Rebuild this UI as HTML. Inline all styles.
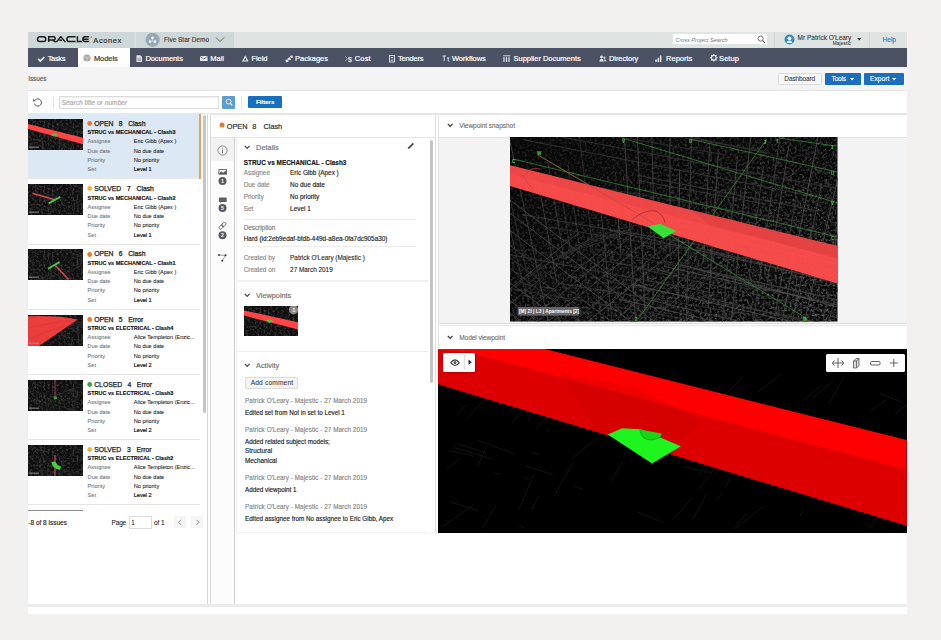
<!DOCTYPE html>
<html><head><meta charset="utf-8">
<style>
*{box-sizing:border-box;margin:0;padding:0}
html,body{width:941px;height:640px;overflow:hidden;background:#f2f1ef;font-family:"Liberation Sans",sans-serif;color:#222}
.a{position:absolute}
.t{position:absolute;white-space:nowrap;line-height:1}
svg{position:absolute;overflow:hidden}
</style></head><body>

<div class="a" style="left:28px;top:32px;width:879px;height:582px;background:#fff;"></div>
<div class="a" style="left:28px;top:32px;width:879px;height:16px;background:#dfe3e2;"></div>
<div class="a" style="left:28px;top:32px;width:205.5px;height:16px;background:#cfd8d8;"></div>
<div class="a" style="left:135px;top:32px;width:1px;height:16px;background:#dde3e3;"></div>
<svg style="left:36px;top:36px" width="58" height="8"><g stroke="#1a1a1a" stroke-width="1.5" fill="none"><rect x="1.5" y="0.85" width="8.3" height="4.6" rx="2.3"/><path d="M12.7 6.1V0.85H17.6A1.55 1.55 0 0 1 17.6 3.95H13.3M16.2 3.95L19.8 6.1"/><path d="M20.4 6.1L24.8 0.6L29.3 6.1M23.4 4.3H26"/><path d="M39.6 0.85H33.2A2.3 2.3 0 0 0 33.2 5.45H39.6"/><path d="M41.4 0.25V5.45H46"/><path d="M53.2 0.85H49.2A2.3 2.3 0 0 0 49.2 5.45H53.2M47.5 3.15H52.6"/></g><circle cx="55.2" cy="1" r="0.6" fill="#555"/></svg>
<div class="t" style="left:93.30px;top:36.67px;font-size:7.6px;color:#2a2a2a;letter-spacing:0.530px;-webkit-text-stroke:0.15px #2a2a2a;">Aconex</div>
<svg style="left:145px;top:32.5px" width="15" height="15"><circle cx="7.6" cy="6.8" r="7.1" fill="#98a7b4"/><circle cx="7.5" cy="4.7" r="1.25" fill="#fff"/><circle cx="5.2" cy="8.6" r="1.3" fill="#fff"/><circle cx="9.8" cy="8.6" r="1.3" fill="#fff"/><path d="M7.5 4.7V8.5" stroke="#eef" stroke-width="0.5"/></svg>
<div class="t" style="left:164.00px;top:37.20px;font-size:6.5px;color:#404040;letter-spacing:-0.012px;-webkit-text-stroke:0.15px #404040;">Five Star Demo</div>
<svg style="left:215px;top:36px" width="10" height="7"><path d="M1 1.5L5 5.5L9 1.5" stroke="#555" stroke-width="0.9" fill="none"/></svg>
<div class="a" style="left:672px;top:33px;width:95.5px;height:12px;background:#fff;border:1px solid #e3e6e6"></div>
<div class="t" style="left:675.40px;top:37.56px;font-size:5.6px;color:#7a7a7a;font-style:italic;letter-spacing:-0.032px;">Cross Project Search</div>
<svg style="left:757px;top:35px" width="9" height="9"><circle cx="3.6" cy="3.6" r="2.6" stroke="#666" stroke-width="0.9" fill="none"/><path d="M5.5 5.5L8 8" stroke="#666" stroke-width="1.1"/></svg>
<div class="a" style="left:774px;top:32px;width:1px;height:16px;background:#cfd5d5;"></div>
<svg style="left:783.5px;top:34px" width="12" height="12"><circle cx="5.5" cy="5.5" r="5.6" fill="#d8eef8"/><circle cx="5.5" cy="5.5" r="5" fill="#3a87b9"/><circle cx="5.5" cy="4.3" r="1.9" fill="#eaf8ff"/><path d="M2.6 8.9C2.9 7.2 4 6.4 5.5 6.4S8.1 7.2 8.4 8.9Z" fill="#eaf8ff"/></svg>
<div class="t" style="left:797.60px;top:34.60px;font-size:6.5px;color:#2a2a2a;letter-spacing:0.005px;-webkit-text-stroke:0.05px #2a2a2a;">Mr Patrick O'Leary</div>
<div class="t" style="left:832.70px;top:41.74px;font-size:4.8px;color:#333;letter-spacing:0.099px;-webkit-text-stroke:0.05px #333;">Majestic</div>
<svg style="left:857px;top:38px" width="5" height="3"><path d="M0 0H4.4L2.2 2.5Z" fill="#333"/></svg>
<div class="a" style="left:868.5px;top:32px;width:1px;height:16px;background:#cfd5d5;"></div>
<div class="t" style="left:882.60px;top:36.71px;font-size:6.6px;color:#1b78c2;letter-spacing:-0.058px;-webkit-text-stroke:0.1px #1b78c2;">Help</div>
<div class="a" style="left:28px;top:48px;width:879px;height:19px;background:#4a5263;"></div>
<div class="a" style="left:78px;top:48px;width:52px;height:19px;background:#fff;"></div>
<div class="t" style="left:47.70px;top:55.15px;font-size:7.5px;color:#fff;letter-spacing:-0.351px;-webkit-text-stroke:0.2px #fff;">Tasks</div>
<div class="t" style="left:93.90px;top:55.15px;font-size:7.5px;color:#3a3a3a;letter-spacing:-0.055px;-webkit-text-stroke:0.2px #3a3a3a;">Models</div>
<div class="t" style="left:145.40px;top:55.15px;font-size:7.5px;color:#fff;letter-spacing:-0.054px;-webkit-text-stroke:0.2px #fff;">Documents</div>
<div class="t" style="left:210.20px;top:55.15px;font-size:7.5px;color:#fff;letter-spacing:0.016px;-webkit-text-stroke:0.2px #fff;">Mail</div>
<div class="t" style="left:251.50px;top:55.15px;font-size:7.5px;color:#fff;letter-spacing:-0.089px;-webkit-text-stroke:0.2px #fff;">Field</div>
<div class="t" style="left:295.00px;top:55.15px;font-size:7.5px;color:#fff;letter-spacing:0.009px;-webkit-text-stroke:0.2px #fff;">Packages</div>
<div class="t" style="left:354.80px;top:55.15px;font-size:7.5px;color:#fff;letter-spacing:0.160px;-webkit-text-stroke:0.2px #fff;">Cost</div>
<div class="t" style="left:397.90px;top:55.15px;font-size:7.5px;color:#fff;letter-spacing:-0.186px;-webkit-text-stroke:0.2px #fff;">Tenders</div>
<div class="t" style="left:451.90px;top:55.15px;font-size:7.5px;color:#fff;letter-spacing:-0.073px;-webkit-text-stroke:0.2px #fff;">Workflows</div>
<div class="t" style="left:513.50px;top:55.15px;font-size:7.5px;color:#fff;letter-spacing:-0.020px;-webkit-text-stroke:0.2px #fff;">Supplier Documents</div>
<div class="t" style="left:609.00px;top:55.15px;font-size:7.5px;color:#fff;letter-spacing:-0.088px;-webkit-text-stroke:0.2px #fff;">Directory</div>
<div class="t" style="left:666.10px;top:55.15px;font-size:7.5px;color:#fff;letter-spacing:-0.010px;-webkit-text-stroke:0.2px #fff;">Reports</div>
<div class="t" style="left:719.10px;top:55.15px;font-size:7.5px;color:#fff;letter-spacing:0.050px;-webkit-text-stroke:0.2px #fff;">Setup</div>
<svg style="left:36.5px;top:55.5px" width="10" height="8"><path d="M1.2 2.9L3.3 5.1L7.3 1" stroke="#f0f0f2" stroke-width="1.6" fill="none"/></svg>
<svg style="left:83px;top:54px" width="8" height="8"><circle cx="4" cy="4" r="3.6" fill="#a9a9a9"/><path d="M1.5 2.6L4 3.9L6.5 2.6M4 3.9V7" stroke="#e0e0e0" stroke-width="0.7" fill="none"/></svg>
<svg style="left:135.5px;top:54.8px" width="7" height="8"><path d="M0.5 0.3H4.3L6 2V7H0.5Z" fill="#e8e8ea"/><path d="M1.5 3H5M1.5 4.3H5M1.5 5.6H5" stroke="#4a5263" stroke-width="0.5"/></svg>
<svg style="left:200px;top:56px" width="8" height="6"><rect x="0" y="0" width="7.6" height="5" fill="#e8e8ea"/><path d="M0 0.4L3.8 3L7.6 0.4" stroke="#4a5263" stroke-width="0.7" fill="none"/></svg>
<svg style="left:241.5px;top:55px" width="7" height="7"><path d="M3.3 0.3L6.6 6.4H0Z" fill="#e8e8ea"/><path d="M3.3 2.6L4.6 5.6H2Z" fill="#4a5263"/></svg>
<svg style="left:284.5px;top:55px" width="9" height="8"><g fill="#e8e8ea"><rect x="0.6" y="4.6" width="2.6" height="2.6" transform="rotate(-20 1.9 5.9)"/><rect x="3" y="2.6" width="2.6" height="2.6" transform="rotate(-20 4.3 3.9)"/><rect x="5.4" y="0.5" width="2.4" height="2.4" transform="rotate(-20 6.6 1.7)"/></g></svg>
<svg style="left:344.5px;top:55px" width="9" height="8"><path d="M0.3 1.5L2.5 3.7L0.3 5.9" stroke="#b9bdc4" stroke-width="0.9" fill="none"/><text x="3" y="6.6" font-family="Liberation Sans" font-size="7" font-weight="bold" fill="#e8e8ea">$</text></svg>
<svg style="left:388.5px;top:54.8px" width="7" height="8"><rect x="0.5" y="0.5" width="5" height="6.5" fill="none" stroke="#e8e8ea" stroke-width="0.9"/><path d="M1.8 2.5H4.3M1.8 4H4.3M1.8 5.5H4.3" stroke="#e8e8ea" stroke-width="0.6"/></svg>
<svg style="left:442px;top:55px" width="8" height="7"><path d="M0.5 1H4M2.2 1V6M5 3H7.5M6.2 3V5.5Q6.2 6.4 7.4 6.4" stroke="#e8e8ea" stroke-width="0.9" fill="none"/></svg>
<svg style="left:503px;top:54.8px" width="8" height="8"><path d="M0.3 0.8H7.3" stroke="#e8e8ea" stroke-width="0.9"/><path d="M1 2.3V7M3.5 2.3V7M6 2.3V7" stroke="#e8e8ea" stroke-width="1.2"/></svg>
<svg style="left:599px;top:55px" width="8" height="8"><circle cx="2.5" cy="2" r="1.4" fill="#e8e8ea"/><path d="M0.3 6.5Q0.5 3.8 2.5 3.8Q4.5 3.8 4.7 6.5Z" fill="#e8e8ea"/><circle cx="5.5" cy="2.8" r="1.2" fill="#b9bdc4"/><path d="M4.5 6.5Q4.5 4.3 5.5 4.3Q7.3 4.3 7.5 6.5Z" fill="#b9bdc4"/></svg>
<svg style="left:655.3px;top:54.5px" width="8" height="8"><path d="M0.3 7V4.5H1.8V7ZM2.6 7V2.8H4.1V7ZM4.9 7V0.5H6.4V7Z" fill="#e8e8ea"/></svg>
<svg style="left:709.5px;top:54.3px" width="8" height="8"><circle cx="3.8" cy="3.8" r="2.4" fill="none" stroke="#e8e8ea" stroke-width="1.3"/><path d="M3.8 0V1.2M3.8 6.4V7.6M0 3.8H1.2M6.4 3.8H7.6M1.1 1.1L2 2M5.6 5.6L6.5 6.5M1.1 6.5L2 5.6M5.6 2L6.5 1.1" stroke="#e8e8ea" stroke-width="1.1"/></svg>
<div class="a" style="left:28px;top:67px;width:879px;height:23.5px;background:#f4f4f4;"></div>
<div class="a" style="left:28px;top:90px;width:879px;height:1px;background:#e3e3e3;"></div>
<div class="t" style="left:28.20px;top:76.17px;font-size:6.3px;color:#555;-webkit-text-stroke:0.15px #555;">Issues</div>
<div class="a" style="left:777.5px;top:72.7px;width:44.5px;height:12px;background:#f7f7f7;border:1px solid #dcdcdc;border-radius:1px"></div>
<div class="t" style="left:784.30px;top:76.01px;font-size:6.6px;color:#333;letter-spacing:-0.161px;-webkit-text-stroke:0.05px #333;">Dashboard</div>
<div class="a" style="left:825.4px;top:72.7px;width:35.4px;height:12px;background:#1a6ebd;border-radius:1px"></div>
<div class="t" style="left:831.60px;top:75.93px;font-size:6.7px;color:#fff;letter-spacing:-0.271px;-webkit-text-stroke:0.12px #fff;">Tools</div>
<svg style="left:849.8px;top:77.6px" width="5" height="3"><path d="M0 0H4.2L2.1 2.4Z" fill="#fff"/></svg>
<div class="a" style="left:864px;top:72.7px;width:39.6px;height:12px;background:#1a6ebd;border-radius:1px"></div>
<div class="t" style="left:870.00px;top:75.93px;font-size:6.7px;color:#fff;letter-spacing:0.007px;-webkit-text-stroke:0.12px #fff;">Export</div>
<svg style="left:891.8px;top:77.6px" width="5" height="3"><path d="M0 0H4.2L2.1 2.4Z" fill="#fff"/></svg>
<div class="a" style="left:28px;top:91px;width:879px;height:23px;background:#fff;"></div>
<div class="a" style="left:28px;top:113px;width:879px;height:1px;background:#e8e8e8;"></div>
<svg style="left:32px;top:97px" width="12" height="11"><path d="M3.1 3.2A3.6 3.6 0 1 1 2.4 6.6" stroke="#555" stroke-width="1" fill="none"/><path d="M1.2 1.6L3.6 3.9L1.2 4.6Z" fill="#555"/></svg>
<div class="a" style="left:53.2px;top:96px;width:1px;height:12.5px;background:#e3e3e3;"></div>
<div class="a" style="left:59.3px;top:96.2px;width:160px;height:12.4px;background:#fff;border:1px solid #dcdcdc;box-shadow:inset 0 1px 1px rgba(0,0,0,0.06)"></div>
<div class="t" style="left:61.60px;top:99.71px;font-size:6.6px;color:#a8a8a8;font-style:italic;letter-spacing:0.037px;-webkit-text-stroke:0.15px #a8a8a8;">Search title or number</div>
<div class="a" style="left:221.8px;top:96px;width:13.2px;height:12.7px;background:#5b9ed6;border-radius:1px"></div>
<svg style="left:224.5px;top:98.3px" width="8" height="8"><circle cx="3.6" cy="3.6" r="2.4" stroke="#fff" stroke-width="0.9" fill="none"/><path d="M5.3 5.3L7.3 7.3" stroke="#fff" stroke-width="1.1"/></svg>
<div class="a" style="left:241.2px;top:96px;width:1px;height:12.5px;background:#e6e6e6;"></div>
<div class="a" style="left:248px;top:96.3px;width:33.8px;height:11.5px;background:#1570c0;border-radius:1px"></div>
<div class="t" style="left:256.10px;top:99.34px;font-size:6.1px;color:#fff;font-weight:bold;letter-spacing:-0.001px;-webkit-text-stroke:0.15px #fff;">Filters</div>
<div class="a" style="left:207.3px;top:114px;width:1px;height:490px;background:#d6d6d6;"></div>
<div class="a" style="left:210.3px;top:114px;width:1px;height:490px;background:#dadada;"></div>
<svg width="0" height="0" style="left:0;top:0"><defs><filter id="nz" x="0" y="0" width="100%" height="100%"><feTurbulence type="fractalNoise" baseFrequency="0.45" numOctaves="2" seed="4"/><feColorMatrix values="0 0 0 0 0.24  0 0 0 0 0.24  0 0 0 0 0.24  0 0 0 1.1 -0.5"/></filter></defs></svg>
<div class="a" style="left:28px;top:114px;width:172px;height:65px;background:#dce8f3;"></div>
<div class="a" style="left:28px;top:178.4px;width:172px;height:1px;background:#e6e6e6;"></div>
<svg style="left:28px;top:119.0px" width="55" height="31"><rect width="55" height="31" fill="#0e0e0e"/><rect width="55" height="31" filter="url(#nz)"/><path d="M13.1 16.9L17.4 42.0" stroke="#3c3c3c" stroke-width="0.5" opacity="0.9"/><path d="M26.1 18.0L30.2 19.1" stroke="#3c3c3c" stroke-width="0.5" opacity="0.9"/><path d="M46.1 8.0L53.9 4.7" stroke="#3c3c3c" stroke-width="0.5" opacity="0.9"/><path d="M39.4 16.8L54.2 20.5" stroke="#3c3c3c" stroke-width="0.5" opacity="0.9"/><path d="M35.1 4.7L28.3 7.9" stroke="#3c3c3c" stroke-width="0.5" opacity="0.9"/><path d="M50.9 12.1L69.8 17.9" stroke="#3c3c3c" stroke-width="0.5" opacity="0.9"/><path d="M3.5 23.5L8.4 24.7" stroke="#3c3c3c" stroke-width="0.5" opacity="0.9"/><path d="M42.9 25.5L45.5 40.4" stroke="#3c3c3c" stroke-width="0.5" opacity="0.9"/><path d="M39.5 27.2L19.2 36.9" stroke="#3c3c3c" stroke-width="0.5" opacity="0.9"/><path d="M23.5 22.6L37.5 26.1" stroke="#3c3c3c" stroke-width="0.5" opacity="0.9"/><path d="M51.5 27.2L56.1 28.7" stroke="#3c3c3c" stroke-width="0.5" opacity="0.9"/><path d="M27.2 8.0L14.3 14.1" stroke="#3c3c3c" stroke-width="0.5" opacity="0.9"/><path d="M34.5 9.3L57.3 15.2" stroke="#3c3c3c" stroke-width="0.5" opacity="0.9"/><path d="M31.6 16.6L31.1 34.3" stroke="#3c3c3c" stroke-width="0.5" opacity="0.9"/><path d="M49.7 21.1L72.8 28.3" stroke="#3c3c3c" stroke-width="0.5" opacity="0.9"/><path d="M54.5 20.8L73.3 12.9" stroke="#3c3c3c" stroke-width="0.5" opacity="0.9"/><path d="M18.0 16.8L34.8 21.1" stroke="#3c3c3c" stroke-width="0.5" opacity="0.9"/><path d="M39.3 6.5L49.2 9.1" stroke="#3c3c3c" stroke-width="0.5" opacity="0.9"/><path d="M6.8 14.9L-17.8 26.6" stroke="#3c3c3c" stroke-width="0.5" opacity="0.9"/><path d="M4.9 24.8L4.1 49.9" stroke="#3c3c3c" stroke-width="0.5" opacity="0.9"/><path d="M1.1 13.2L0.4 37.7" stroke="#3c3c3c" stroke-width="0.5" opacity="0.9"/><path d="M2.4 19.1L14.7 22.9" stroke="#3c3c3c" stroke-width="0.5" opacity="0.9"/><path d="M32.3 17.1L34.9 32.7" stroke="#3c3c3c" stroke-width="0.5" opacity="0.9"/><path d="M54.9 9.6L61.2 11.5" stroke="#3c3c3c" stroke-width="0.5" opacity="0.9"/><path d="M29.5 29.4L29.1 40.3" stroke="#3c3c3c" stroke-width="0.5" opacity="0.9"/><path d="M14.5 21.4L16.4 32.6" stroke="#3c3c3c" stroke-width="0.5" opacity="0.9"/><path d="M52.7 27.8L52.4 40.6" stroke="#3c3c3c" stroke-width="0.5" opacity="0.9"/><path d="M47.8 12.0L67.2 16.9" stroke="#3c3c3c" stroke-width="0.5" opacity="0.9"/><path d="M5.6 30.2L15.7 32.7" stroke="#3c3c3c" stroke-width="0.5" opacity="0.9"/><path d="M34.9 22.2L37.3 36.3" stroke="#3c3c3c" stroke-width="0.5" opacity="0.9"/><path d="M0 5L55 18.7V25.2L0 10Z" fill="#ff4545"/><path d="M23 15.5L28 14.5L30 16.5L25 17.5Z" fill="#3ccf3c"/><rect x="1" y="27.5" width="10" height="1.5" fill="#999" opacity="0.6"/></svg>
<svg style="left:87px;top:121.2px" width="6" height="6"><circle cx="2.7" cy="2.5" r="2.4" fill="#e8792c"/></svg>
<div class="t" style="left:94.20px;top:121.04px;font-size:6.8px;color:#1a1a1a;-webkit-text-stroke:0.25px #1a1a1a;">OPEN</div>
<div class="t" style="left:118.77px;top:121.04px;font-size:6.8px;color:#1a1a1a;-webkit-text-stroke:0.25px #1a1a1a;">8</div>
<div class="t" style="left:128.15px;top:121.04px;font-size:6.8px;color:#1a1a1a;-webkit-text-stroke:0.25px #1a1a1a;">Clash</div>
<div class="t" style="left:87.60px;top:130.44px;font-size:5.5px;color:#111;font-weight:bold;-webkit-text-stroke:0.15px #111;">STRUC vs MECHANICAL - Clash3</div>
<div class="t" style="left:87.60px;top:139.46px;font-size:5.6px;color:#7a7a7a;-webkit-text-stroke:0.1px #7a7a7a;">Assignee</div>
<div class="t" style="left:133.70px;top:139.46px;font-size:5.6px;color:#151515;-webkit-text-stroke:0.06px #151515;">Eric Gibb (Apex )</div>
<div class="t" style="left:87.60px;top:148.76px;font-size:5.6px;color:#7a7a7a;-webkit-text-stroke:0.1px #7a7a7a;">Due date</div>
<div class="t" style="left:133.70px;top:148.76px;font-size:5.6px;color:#151515;-webkit-text-stroke:0.06px #151515;">No due date</div>
<div class="t" style="left:87.60px;top:158.06px;font-size:5.6px;color:#7a7a7a;-webkit-text-stroke:0.1px #7a7a7a;">Priority</div>
<div class="t" style="left:133.70px;top:158.06px;font-size:5.6px;color:#151515;-webkit-text-stroke:0.06px #151515;">No priority</div>
<div class="t" style="left:87.60px;top:167.36px;font-size:5.6px;color:#7a7a7a;-webkit-text-stroke:0.1px #7a7a7a;">Set</div>
<div class="t" style="left:133.70px;top:167.36px;font-size:5.6px;color:#151515;-webkit-text-stroke:0.2px #151515;">Level 1</div>
<div class="a" style="left:28px;top:243.6px;width:172px;height:1px;background:#e6e6e6;"></div>
<svg style="left:28px;top:184.2px" width="55" height="31"><rect width="55" height="31" fill="#0e0e0e"/><rect width="55" height="31" filter="url(#nz)"/><path d="M13.0 3.2L12.5 18.4" stroke="#3c3c3c" stroke-width="0.5" opacity="0.9"/><path d="M5.0 0.6L29.7 6.9" stroke="#3c3c3c" stroke-width="0.5" opacity="0.9"/><path d="M44.0 23.7L59.0 17.4" stroke="#3c3c3c" stroke-width="0.5" opacity="0.9"/><path d="M19.8 24.2L29.5 27.2" stroke="#3c3c3c" stroke-width="0.5" opacity="0.9"/><path d="M51.9 0.8L31.1 10.6" stroke="#3c3c3c" stroke-width="0.5" opacity="0.9"/><path d="M44.0 6.0L45.9 16.6" stroke="#3c3c3c" stroke-width="0.5" opacity="0.9"/><path d="M47.7 29.8L48.7 35.7" stroke="#3c3c3c" stroke-width="0.5" opacity="0.9"/><path d="M33.3 20.8L42.9 23.3" stroke="#3c3c3c" stroke-width="0.5" opacity="0.9"/><path d="M13.6 8.7L36.6 14.6" stroke="#3c3c3c" stroke-width="0.5" opacity="0.9"/><path d="M0.4 9.1L-22.0 19.6" stroke="#3c3c3c" stroke-width="0.5" opacity="0.9"/><path d="M46.6 15.8L46.2 29.7" stroke="#3c3c3c" stroke-width="0.5" opacity="0.9"/><path d="M15.9 14.0L26.1 9.6" stroke="#3c3c3c" stroke-width="0.5" opacity="0.9"/><path d="M44.7 1.3L58.9 5.7" stroke="#3c3c3c" stroke-width="0.5" opacity="0.9"/><path d="M54.9 16.1L41.2 22.5" stroke="#3c3c3c" stroke-width="0.5" opacity="0.9"/><path d="M18.9 30.9L24.0 28.7" stroke="#3c3c3c" stroke-width="0.5" opacity="0.9"/><path d="M50.2 19.7L49.9 30.2" stroke="#3c3c3c" stroke-width="0.5" opacity="0.9"/><path d="M19.6 23.2L22.8 41.8" stroke="#3c3c3c" stroke-width="0.5" opacity="0.9"/><path d="M10.9 10.0L30.6 16.1" stroke="#3c3c3c" stroke-width="0.5" opacity="0.9"/><path d="M15.3 18.0L21.6 15.4" stroke="#3c3c3c" stroke-width="0.5" opacity="0.9"/><path d="M51.4 9.0L56.2 10.5" stroke="#3c3c3c" stroke-width="0.5" opacity="0.9"/><path d="M38.4 27.8L42.0 48.7" stroke="#3c3c3c" stroke-width="0.5" opacity="0.9"/><path d="M52.8 0.6L54.8 12.0" stroke="#3c3c3c" stroke-width="0.5" opacity="0.9"/><path d="M8.4 20.2L27.8 25.2" stroke="#3c3c3c" stroke-width="0.5" opacity="0.9"/><path d="M4.3 19.1L4.0 30.0" stroke="#3c3c3c" stroke-width="0.5" opacity="0.9"/><path d="M13.8 18.6L24.6 14.0" stroke="#3c3c3c" stroke-width="0.5" opacity="0.9"/><path d="M0.5 1.4L12.1 -3.5" stroke="#3c3c3c" stroke-width="0.5" opacity="0.9"/><path d="M44.2 30.9L50.3 32.5" stroke="#3c3c3c" stroke-width="0.5" opacity="0.9"/><path d="M54.0 13.1L60.1 10.5" stroke="#3c3c3c" stroke-width="0.5" opacity="0.9"/><path d="M3.4 22.9L22.7 27.8" stroke="#3c3c3c" stroke-width="0.5" opacity="0.9"/><path d="M8.2 1.3L7.7 19.0" stroke="#3c3c3c" stroke-width="0.5" opacity="0.9"/><path d="M4.4 9.3L27.4 16" stroke="#d84a4a" stroke-width="1.6"/><path d="M20.8 19.4L32.3 12.8" stroke="#45c845" stroke-width="1.8"/><rect x="1" y="27.5" width="10" height="1.5" fill="#999" opacity="0.6"/></svg>
<svg style="left:87px;top:186.4px" width="6" height="6"><circle cx="2.7" cy="2.5" r="2.4" fill="#f0b43c"/></svg>
<div class="t" style="left:94.20px;top:186.24px;font-size:6.8px;color:#1a1a1a;-webkit-text-stroke:0.25px #1a1a1a;">SOLVED</div>
<div class="t" style="left:127.09px;top:186.24px;font-size:6.8px;color:#1a1a1a;-webkit-text-stroke:0.25px #1a1a1a;">7</div>
<div class="t" style="left:136.47px;top:186.24px;font-size:6.8px;color:#1a1a1a;-webkit-text-stroke:0.25px #1a1a1a;">Clash</div>
<div class="t" style="left:87.60px;top:195.64px;font-size:5.5px;color:#111;font-weight:bold;-webkit-text-stroke:0.15px #111;">STRUC vs MECHANICAL - Clash2</div>
<div class="t" style="left:87.60px;top:204.66px;font-size:5.6px;color:#7a7a7a;-webkit-text-stroke:0.1px #7a7a7a;">Assignee</div>
<div class="t" style="left:133.70px;top:204.66px;font-size:5.6px;color:#151515;-webkit-text-stroke:0.06px #151515;">Eric Gibb (Apex )</div>
<div class="t" style="left:87.60px;top:213.96px;font-size:5.6px;color:#7a7a7a;-webkit-text-stroke:0.1px #7a7a7a;">Due date</div>
<div class="t" style="left:133.70px;top:213.96px;font-size:5.6px;color:#151515;-webkit-text-stroke:0.06px #151515;">No due date</div>
<div class="t" style="left:87.60px;top:223.26px;font-size:5.6px;color:#7a7a7a;-webkit-text-stroke:0.1px #7a7a7a;">Priority</div>
<div class="t" style="left:133.70px;top:223.26px;font-size:5.6px;color:#151515;-webkit-text-stroke:0.06px #151515;">No priority</div>
<div class="t" style="left:87.60px;top:232.56px;font-size:5.6px;color:#7a7a7a;-webkit-text-stroke:0.1px #7a7a7a;">Set</div>
<div class="t" style="left:133.70px;top:232.56px;font-size:5.6px;color:#151515;-webkit-text-stroke:0.2px #151515;">Level 1</div>
<div class="a" style="left:28px;top:308.8px;width:172px;height:1px;background:#e6e6e6;"></div>
<svg style="left:28px;top:249.4px" width="55" height="31"><rect width="55" height="31" fill="#0e0e0e"/><rect width="55" height="31" filter="url(#nz)"/><path d="M34.3 23.0L10.6 34.2" stroke="#3c3c3c" stroke-width="0.5" opacity="0.9"/><path d="M40.7 28.6L63.4 35.6" stroke="#3c3c3c" stroke-width="0.5" opacity="0.9"/><path d="M42.7 7.7L66.7 15.2" stroke="#3c3c3c" stroke-width="0.5" opacity="0.9"/><path d="M6.2 14.5L18.2 9.5" stroke="#3c3c3c" stroke-width="0.5" opacity="0.9"/><path d="M5.6 7.7L-2.6 11.6" stroke="#3c3c3c" stroke-width="0.5" opacity="0.9"/><path d="M15.4 28.4L15.1 36.2" stroke="#3c3c3c" stroke-width="0.5" opacity="0.9"/><path d="M43.8 4.3L57.8 7.9" stroke="#3c3c3c" stroke-width="0.5" opacity="0.9"/><path d="M7.3 30.1L15.8 32.8" stroke="#3c3c3c" stroke-width="0.5" opacity="0.9"/><path d="M11.9 30.5L21.8 26.2" stroke="#3c3c3c" stroke-width="0.5" opacity="0.9"/><path d="M52.9 16.7L36.0 24.7" stroke="#3c3c3c" stroke-width="0.5" opacity="0.9"/><path d="M10.0 30.0L34.6 19.6" stroke="#3c3c3c" stroke-width="0.5" opacity="0.9"/><path d="M49.2 9.3L51.5 22.8" stroke="#3c3c3c" stroke-width="0.5" opacity="0.9"/><path d="M51.5 8.2L53.4 19.1" stroke="#3c3c3c" stroke-width="0.5" opacity="0.9"/><path d="M33.2 0.1L14.5 8.9" stroke="#3c3c3c" stroke-width="0.5" opacity="0.9"/><path d="M3.6 11.0L6.2 26.1" stroke="#3c3c3c" stroke-width="0.5" opacity="0.9"/><path d="M17.4 14.9L10.0 18.4" stroke="#3c3c3c" stroke-width="0.5" opacity="0.9"/><path d="M14.1 29.1L2.9 34.4" stroke="#3c3c3c" stroke-width="0.5" opacity="0.9"/><path d="M22.2 17.0L21.9 29.6" stroke="#3c3c3c" stroke-width="0.5" opacity="0.9"/><path d="M31.8 0.3L51.5 6.4" stroke="#3c3c3c" stroke-width="0.5" opacity="0.9"/><path d="M34.3 29.6L55.1 36.0" stroke="#3c3c3c" stroke-width="0.5" opacity="0.9"/><path d="M51.1 29.2L53.9 45.0" stroke="#3c3c3c" stroke-width="0.5" opacity="0.9"/><path d="M49.1 7.8L48.9 14.3" stroke="#3c3c3c" stroke-width="0.5" opacity="0.9"/><path d="M41.2 24.7L42.0 29.5" stroke="#3c3c3c" stroke-width="0.5" opacity="0.9"/><path d="M52.0 2.8L54.7 18.6" stroke="#3c3c3c" stroke-width="0.5" opacity="0.9"/><path d="M19.9 4.6L24.3 29.9" stroke="#3c3c3c" stroke-width="0.5" opacity="0.9"/><path d="M30.0 9.7L31.9 20.7" stroke="#3c3c3c" stroke-width="0.5" opacity="0.9"/><path d="M43.9 19.4L25.7 28.1" stroke="#3c3c3c" stroke-width="0.5" opacity="0.9"/><path d="M54.8 5.0L60.5 6.8" stroke="#3c3c3c" stroke-width="0.5" opacity="0.9"/><path d="M33.0 28.6L42.2 31.5" stroke="#3c3c3c" stroke-width="0.5" opacity="0.9"/><path d="M32.7 25.6L32.1 44.9" stroke="#3c3c3c" stroke-width="0.5" opacity="0.9"/><path d="M27 16L40.5 30.5" stroke="#c84848" stroke-width="1.8"/><path d="M20 19.7L31.5 13.1" stroke="#45c845" stroke-width="1.8"/><rect x="1" y="27.5" width="10" height="1.5" fill="#999" opacity="0.6"/></svg>
<svg style="left:87px;top:251.6px" width="6" height="6"><circle cx="2.7" cy="2.5" r="2.4" fill="#e8792c"/></svg>
<div class="t" style="left:94.20px;top:251.44px;font-size:6.8px;color:#1a1a1a;-webkit-text-stroke:0.25px #1a1a1a;">OPEN</div>
<div class="t" style="left:118.77px;top:251.44px;font-size:6.8px;color:#1a1a1a;-webkit-text-stroke:0.25px #1a1a1a;">6</div>
<div class="t" style="left:128.15px;top:251.44px;font-size:6.8px;color:#1a1a1a;-webkit-text-stroke:0.25px #1a1a1a;">Clash</div>
<div class="t" style="left:87.60px;top:260.84px;font-size:5.5px;color:#111;font-weight:bold;-webkit-text-stroke:0.15px #111;">STRUC vs MECHANICAL - Clash1</div>
<div class="t" style="left:87.60px;top:269.86px;font-size:5.6px;color:#7a7a7a;-webkit-text-stroke:0.1px #7a7a7a;">Assignee</div>
<div class="t" style="left:133.70px;top:269.86px;font-size:5.6px;color:#151515;-webkit-text-stroke:0.06px #151515;">Eric Gibb (Apex )</div>
<div class="t" style="left:87.60px;top:279.16px;font-size:5.6px;color:#7a7a7a;-webkit-text-stroke:0.1px #7a7a7a;">Due date</div>
<div class="t" style="left:133.70px;top:279.16px;font-size:5.6px;color:#151515;-webkit-text-stroke:0.06px #151515;">No due date</div>
<div class="t" style="left:87.60px;top:288.46px;font-size:5.6px;color:#7a7a7a;-webkit-text-stroke:0.1px #7a7a7a;">Priority</div>
<div class="t" style="left:133.70px;top:288.46px;font-size:5.6px;color:#151515;-webkit-text-stroke:0.06px #151515;">No priority</div>
<div class="t" style="left:87.60px;top:297.76px;font-size:5.6px;color:#7a7a7a;-webkit-text-stroke:0.1px #7a7a7a;">Set</div>
<div class="t" style="left:133.70px;top:297.76px;font-size:5.6px;color:#151515;-webkit-text-stroke:0.2px #151515;">Level 1</div>
<div class="a" style="left:28px;top:374.0px;width:172px;height:1px;background:#e6e6e6;"></div>
<svg style="left:28px;top:314.6px" width="55" height="31"><rect width="55" height="31" fill="#0e0e0e"/><rect width="55" height="31" filter="url(#nz)"/><path d="M43.6 25.5L43.0 47.4" stroke="#3c3c3c" stroke-width="0.5" opacity="0.9"/><path d="M2.0 4.5L16.6 8.2" stroke="#3c3c3c" stroke-width="0.5" opacity="0.9"/><path d="M41.8 11.6L51.7 14.6" stroke="#3c3c3c" stroke-width="0.5" opacity="0.9"/><path d="M44.1 22.6L43.4 48.0" stroke="#3c3c3c" stroke-width="0.5" opacity="0.9"/><path d="M29.7 2.9L46.1 7.1" stroke="#3c3c3c" stroke-width="0.5" opacity="0.9"/><path d="M44.3 8.2L63.8 13.2" stroke="#3c3c3c" stroke-width="0.5" opacity="0.9"/><path d="M46.4 10.4L58.4 14.1" stroke="#3c3c3c" stroke-width="0.5" opacity="0.9"/><path d="M22.5 7.8L16.9 10.4" stroke="#3c3c3c" stroke-width="0.5" opacity="0.9"/><path d="M10.8 19.7L11.9 25.9" stroke="#3c3c3c" stroke-width="0.5" opacity="0.9"/><path d="M2.5 28.0L-20.5 38.9" stroke="#3c3c3c" stroke-width="0.5" opacity="0.9"/><path d="M26.8 25.8L41.6 19.5" stroke="#3c3c3c" stroke-width="0.5" opacity="0.9"/><path d="M35.5 21.6L61.6 28.3" stroke="#3c3c3c" stroke-width="0.5" opacity="0.9"/><path d="M1.6 11.2L15.2 14.7" stroke="#3c3c3c" stroke-width="0.5" opacity="0.9"/><path d="M19.7 3.7L43.6 9.8" stroke="#3c3c3c" stroke-width="0.5" opacity="0.9"/><path d="M28.9 3.6L19.6 8.0" stroke="#3c3c3c" stroke-width="0.5" opacity="0.9"/><path d="M39.5 11.8L46.2 9.0" stroke="#3c3c3c" stroke-width="0.5" opacity="0.9"/><path d="M11.5 26.8L-3.2 33.8" stroke="#3c3c3c" stroke-width="0.5" opacity="0.9"/><path d="M10.4 5.2L-0.3 10.3" stroke="#3c3c3c" stroke-width="0.5" opacity="0.9"/><path d="M49.7 19.2L51.9 31.8" stroke="#3c3c3c" stroke-width="0.5" opacity="0.9"/><path d="M29.0 9.0L4.1 20.7" stroke="#3c3c3c" stroke-width="0.5" opacity="0.9"/><path d="M3.0 13.1L-21.9 24.8" stroke="#3c3c3c" stroke-width="0.5" opacity="0.9"/><path d="M5.3 13.7L29.1 21.1" stroke="#3c3c3c" stroke-width="0.5" opacity="0.9"/><path d="M36.9 27.6L36.2 50.0" stroke="#3c3c3c" stroke-width="0.5" opacity="0.9"/><path d="M20.9 2.4L20.5 17.4" stroke="#3c3c3c" stroke-width="0.5" opacity="0.9"/><path d="M38.8 12.7L46.9 15.2" stroke="#3c3c3c" stroke-width="0.5" opacity="0.9"/><path d="M37.4 14.0L17.1 23.6" stroke="#3c3c3c" stroke-width="0.5" opacity="0.9"/><path d="M9.5 0.7L18.9 3.6" stroke="#3c3c3c" stroke-width="0.5" opacity="0.9"/><path d="M44.1 5.8L58.3 9.4" stroke="#3c3c3c" stroke-width="0.5" opacity="0.9"/><path d="M51.0 7.9L50.3 33.7" stroke="#3c3c3c" stroke-width="0.5" opacity="0.9"/><path d="M23.2 15.0L37.9 18.8" stroke="#3c3c3c" stroke-width="0.5" opacity="0.9"/><path d="M0 1.2Q32 0.4 49.8 4.5L10.8 31H0Z" fill="#ec3d3d"/><path d="M0 13Q25 7 48 5M0 24Q22 15 40 10" stroke="#c83636" stroke-width="0.5" fill="none"/><rect x="1" y="27.5" width="10" height="1.5" fill="#999" opacity="0.6"/></svg>
<svg style="left:87px;top:316.8px" width="6" height="6"><circle cx="2.7" cy="2.5" r="2.4" fill="#e8792c"/></svg>
<div class="t" style="left:94.20px;top:316.64px;font-size:6.8px;color:#1a1a1a;-webkit-text-stroke:0.25px #1a1a1a;">OPEN</div>
<div class="t" style="left:118.77px;top:316.64px;font-size:6.8px;color:#1a1a1a;-webkit-text-stroke:0.25px #1a1a1a;">5</div>
<div class="t" style="left:128.15px;top:316.64px;font-size:6.8px;color:#1a1a1a;-webkit-text-stroke:0.25px #1a1a1a;">Error</div>
<div class="t" style="left:87.60px;top:326.04px;font-size:5.5px;color:#111;font-weight:bold;-webkit-text-stroke:0.15px #111;">STRUC vs ELECTRICAL - Clash4</div>
<div class="t" style="left:87.60px;top:335.06px;font-size:5.6px;color:#7a7a7a;-webkit-text-stroke:0.1px #7a7a7a;">Assignee</div>
<div class="t" style="left:133.70px;top:335.06px;font-size:5.6px;color:#151515;-webkit-text-stroke:0.06px #151515;">Alice Templeton (Enzic...</div>
<div class="t" style="left:87.60px;top:344.36px;font-size:5.6px;color:#7a7a7a;-webkit-text-stroke:0.1px #7a7a7a;">Due date</div>
<div class="t" style="left:133.70px;top:344.36px;font-size:5.6px;color:#151515;-webkit-text-stroke:0.06px #151515;">No due date</div>
<div class="t" style="left:87.60px;top:353.66px;font-size:5.6px;color:#7a7a7a;-webkit-text-stroke:0.1px #7a7a7a;">Priority</div>
<div class="t" style="left:133.70px;top:353.66px;font-size:5.6px;color:#151515;-webkit-text-stroke:0.06px #151515;">No priority</div>
<div class="t" style="left:87.60px;top:362.96px;font-size:5.6px;color:#7a7a7a;-webkit-text-stroke:0.1px #7a7a7a;">Set</div>
<div class="t" style="left:133.70px;top:362.96px;font-size:5.6px;color:#151515;-webkit-text-stroke:0.2px #151515;">Level 2</div>
<div class="a" style="left:28px;top:439.2px;width:172px;height:1px;background:#e6e6e6;"></div>
<svg style="left:28px;top:379.8px" width="55" height="31"><rect width="55" height="31" fill="#0e0e0e"/><rect width="55" height="31" filter="url(#nz)"/><path d="M17.8 4.7L13.2 6.9" stroke="#3c3c3c" stroke-width="0.5" opacity="0.9"/><path d="M45.2 2.9L50.4 4.2" stroke="#3c3c3c" stroke-width="0.5" opacity="0.9"/><path d="M27.9 1.2L27.5 15.0" stroke="#3c3c3c" stroke-width="0.5" opacity="0.9"/><path d="M13.2 17.1L35.6 24.0" stroke="#3c3c3c" stroke-width="0.5" opacity="0.9"/><path d="M6.8 6.9L-9.2 14.5" stroke="#3c3c3c" stroke-width="0.5" opacity="0.9"/><path d="M3.4 18.2L29.1 26.1" stroke="#3c3c3c" stroke-width="0.5" opacity="0.9"/><path d="M2.6 26.6L4.9 40.3" stroke="#3c3c3c" stroke-width="0.5" opacity="0.9"/><path d="M29.7 17.7L52.2 23.4" stroke="#3c3c3c" stroke-width="0.5" opacity="0.9"/><path d="M9.9 18.0L2.3 21.6" stroke="#3c3c3c" stroke-width="0.5" opacity="0.9"/><path d="M5.4 22.1L10.6 23.4" stroke="#3c3c3c" stroke-width="0.5" opacity="0.9"/><path d="M11.3 21.1L10.7 43.3" stroke="#3c3c3c" stroke-width="0.5" opacity="0.9"/><path d="M25.6 28.6L27.5 39.5" stroke="#3c3c3c" stroke-width="0.5" opacity="0.9"/><path d="M43.7 21.7L49.1 19.4" stroke="#3c3c3c" stroke-width="0.5" opacity="0.9"/><path d="M16.5 15.3L20.1 36.2" stroke="#3c3c3c" stroke-width="0.5" opacity="0.9"/><path d="M15.8 30.4L31.2 35.1" stroke="#3c3c3c" stroke-width="0.5" opacity="0.9"/><path d="M9.1 10.6L8.7 24.5" stroke="#3c3c3c" stroke-width="0.5" opacity="0.9"/><path d="M52.9 2.4L69.8 6.7" stroke="#3c3c3c" stroke-width="0.5" opacity="0.9"/><path d="M48.2 9.7L37.1 15.0" stroke="#3c3c3c" stroke-width="0.5" opacity="0.9"/><path d="M27.3 24.7L50.0 31.7" stroke="#3c3c3c" stroke-width="0.5" opacity="0.9"/><path d="M52.0 14.7L47.0 17.1" stroke="#3c3c3c" stroke-width="0.5" opacity="0.9"/><path d="M40.2 9.6L66.7 16.4" stroke="#3c3c3c" stroke-width="0.5" opacity="0.9"/><path d="M45.2 8.8L44.5 33.7" stroke="#3c3c3c" stroke-width="0.5" opacity="0.9"/><path d="M19.1 29.2L20.4 37.0" stroke="#3c3c3c" stroke-width="0.5" opacity="0.9"/><path d="M6.4 1.8L7.6 8.8" stroke="#3c3c3c" stroke-width="0.5" opacity="0.9"/><path d="M13.6 12.1L13.4 18.0" stroke="#3c3c3c" stroke-width="0.5" opacity="0.9"/><path d="M24.7 17.0L46.1 8.0" stroke="#3c3c3c" stroke-width="0.5" opacity="0.9"/><path d="M47.5 8.6L46.7 35.8" stroke="#3c3c3c" stroke-width="0.5" opacity="0.9"/><path d="M37.5 11.8L44.5 8.9" stroke="#3c3c3c" stroke-width="0.5" opacity="0.9"/><path d="M9.7 7.2L13.6 5.5" stroke="#3c3c3c" stroke-width="0.5" opacity="0.9"/><path d="M45.7 5.7L46.4 9.7" stroke="#3c3c3c" stroke-width="0.5" opacity="0.9"/><path d="M27 0V17" stroke="#b84040" stroke-width="0.8"/><path d="M25.5 16.5L28.5 16L29 19L26 19.5Z" fill="#3a9a3a"/><rect x="1" y="27.5" width="10" height="1.5" fill="#999" opacity="0.6"/></svg>
<svg style="left:87px;top:382.0px" width="6" height="6"><circle cx="2.7" cy="2.5" r="2.4" fill="#3aa24a"/></svg>
<div class="t" style="left:94.20px;top:381.84px;font-size:6.8px;color:#1a1a1a;-webkit-text-stroke:0.25px #1a1a1a;">CLOSED</div>
<div class="t" style="left:127.46px;top:381.84px;font-size:6.8px;color:#1a1a1a;-webkit-text-stroke:0.25px #1a1a1a;">4</div>
<div class="t" style="left:136.85px;top:381.84px;font-size:6.8px;color:#1a1a1a;-webkit-text-stroke:0.25px #1a1a1a;">Error</div>
<div class="t" style="left:87.60px;top:391.24px;font-size:5.5px;color:#111;font-weight:bold;-webkit-text-stroke:0.15px #111;">STRUC vs ELECTRICAL - Clash3</div>
<div class="t" style="left:87.60px;top:400.26px;font-size:5.6px;color:#7a7a7a;-webkit-text-stroke:0.1px #7a7a7a;">Assignee</div>
<div class="t" style="left:133.70px;top:400.26px;font-size:5.6px;color:#151515;-webkit-text-stroke:0.06px #151515;">Alice Templeton (Enzic...</div>
<div class="t" style="left:87.60px;top:409.56px;font-size:5.6px;color:#7a7a7a;-webkit-text-stroke:0.1px #7a7a7a;">Due date</div>
<div class="t" style="left:133.70px;top:409.56px;font-size:5.6px;color:#151515;-webkit-text-stroke:0.06px #151515;">No due date</div>
<div class="t" style="left:87.60px;top:418.86px;font-size:5.6px;color:#7a7a7a;-webkit-text-stroke:0.1px #7a7a7a;">Priority</div>
<div class="t" style="left:133.70px;top:418.86px;font-size:5.6px;color:#151515;-webkit-text-stroke:0.06px #151515;">No priority</div>
<div class="t" style="left:87.60px;top:428.16px;font-size:5.6px;color:#7a7a7a;-webkit-text-stroke:0.1px #7a7a7a;">Set</div>
<div class="t" style="left:133.70px;top:428.16px;font-size:5.6px;color:#151515;-webkit-text-stroke:0.2px #151515;">Level 2</div>
<div class="a" style="left:28px;top:504.4px;width:172px;height:1px;background:#e6e6e6;"></div>
<svg style="left:28px;top:445.0px" width="55" height="31"><rect width="55" height="31" fill="#0e0e0e"/><rect width="55" height="31" filter="url(#nz)"/><path d="M12.5 29.8L20.3 26.5" stroke="#3c3c3c" stroke-width="0.5" opacity="0.9"/><path d="M2.4 4.2L11.1 6.4" stroke="#3c3c3c" stroke-width="0.5" opacity="0.9"/><path d="M35.3 14.2L34.9 27.4" stroke="#3c3c3c" stroke-width="0.5" opacity="0.9"/><path d="M31.5 27.8L31.3 33.9" stroke="#3c3c3c" stroke-width="0.5" opacity="0.9"/><path d="M12.9 0.6L15.6 16.6" stroke="#3c3c3c" stroke-width="0.5" opacity="0.9"/><path d="M26.1 28.2L20.1 31.1" stroke="#3c3c3c" stroke-width="0.5" opacity="0.9"/><path d="M14.2 30.7L26.7 34.6" stroke="#3c3c3c" stroke-width="0.5" opacity="0.9"/><path d="M45.6 3.3L57.0 6.9" stroke="#3c3c3c" stroke-width="0.5" opacity="0.9"/><path d="M38.0 15.4L23.4 22.3" stroke="#3c3c3c" stroke-width="0.5" opacity="0.9"/><path d="M11.4 25.1L16.8 26.4" stroke="#3c3c3c" stroke-width="0.5" opacity="0.9"/><path d="M52.0 15.1L58.9 12.2" stroke="#3c3c3c" stroke-width="0.5" opacity="0.9"/><path d="M47.3 14.1L71.3 20.3" stroke="#3c3c3c" stroke-width="0.5" opacity="0.9"/><path d="M15.7 11.1L15.5 18.2" stroke="#3c3c3c" stroke-width="0.5" opacity="0.9"/><path d="M42.0 3.0L31.8 7.9" stroke="#3c3c3c" stroke-width="0.5" opacity="0.9"/><path d="M19.6 20.0L19.2 35.8" stroke="#3c3c3c" stroke-width="0.5" opacity="0.9"/><path d="M10.9 4.7L21.2 7.3" stroke="#3c3c3c" stroke-width="0.5" opacity="0.9"/><path d="M36.1 25.1L60.8 31.3" stroke="#3c3c3c" stroke-width="0.5" opacity="0.9"/><path d="M30.0 10.7L40.4 13.9" stroke="#3c3c3c" stroke-width="0.5" opacity="0.9"/><path d="M12.1 1.0L14.3 13.7" stroke="#3c3c3c" stroke-width="0.5" opacity="0.9"/><path d="M45.9 27.6L63.8 20.1" stroke="#3c3c3c" stroke-width="0.5" opacity="0.9"/><path d="M6.4 28.9L14.7 31.5" stroke="#3c3c3c" stroke-width="0.5" opacity="0.9"/><path d="M42.2 9.3L63.9 16.0" stroke="#3c3c3c" stroke-width="0.5" opacity="0.9"/><path d="M20.9 25.9L34.7 29.5" stroke="#3c3c3c" stroke-width="0.5" opacity="0.9"/><path d="M12.7 12.7L12.3 26.3" stroke="#3c3c3c" stroke-width="0.5" opacity="0.9"/><path d="M4.4 2.2L-1.2 4.8" stroke="#3c3c3c" stroke-width="0.5" opacity="0.9"/><path d="M4.7 3.3L20.6 7.4" stroke="#3c3c3c" stroke-width="0.5" opacity="0.9"/><path d="M8.5 29.0L7.8 49.7" stroke="#3c3c3c" stroke-width="0.5" opacity="0.9"/><path d="M53.9 2.0L78.2 9.5" stroke="#3c3c3c" stroke-width="0.5" opacity="0.9"/><path d="M18.7 20.4L39.3 26.8" stroke="#3c3c3c" stroke-width="0.5" opacity="0.9"/><path d="M19.3 29.9L37.7 35.6" stroke="#3c3c3c" stroke-width="0.5" opacity="0.9"/><path d="M27 10V31" stroke="#d84848" stroke-width="1.2"/><path d="M23.5 17L27 16.5L30 20.5L33 21.5L32 25L28.5 24L24.5 21Z" fill="#45d045"/><rect x="1" y="27.5" width="10" height="1.5" fill="#999" opacity="0.6"/></svg>
<svg style="left:87px;top:447.2px" width="6" height="6"><circle cx="2.7" cy="2.5" r="2.4" fill="#f0b43c"/></svg>
<div class="t" style="left:94.20px;top:447.04px;font-size:6.8px;color:#1a1a1a;-webkit-text-stroke:0.25px #1a1a1a;">SOLVED</div>
<div class="t" style="left:127.09px;top:447.04px;font-size:6.8px;color:#1a1a1a;-webkit-text-stroke:0.25px #1a1a1a;">3</div>
<div class="t" style="left:136.47px;top:447.04px;font-size:6.8px;color:#1a1a1a;-webkit-text-stroke:0.25px #1a1a1a;">Error</div>
<div class="t" style="left:87.60px;top:456.44px;font-size:5.5px;color:#111;font-weight:bold;-webkit-text-stroke:0.15px #111;">STRUC vs ELECTRICAL - Clash2</div>
<div class="t" style="left:87.60px;top:465.46px;font-size:5.6px;color:#7a7a7a;-webkit-text-stroke:0.1px #7a7a7a;">Assignee</div>
<div class="t" style="left:133.70px;top:465.46px;font-size:5.6px;color:#151515;-webkit-text-stroke:0.06px #151515;">Alice Templeton (Enzic...</div>
<div class="t" style="left:87.60px;top:474.76px;font-size:5.6px;color:#7a7a7a;-webkit-text-stroke:0.1px #7a7a7a;">Due date</div>
<div class="t" style="left:133.70px;top:474.76px;font-size:5.6px;color:#151515;-webkit-text-stroke:0.06px #151515;">No due date</div>
<div class="t" style="left:87.60px;top:484.06px;font-size:5.6px;color:#7a7a7a;-webkit-text-stroke:0.1px #7a7a7a;">Priority</div>
<div class="t" style="left:133.70px;top:484.06px;font-size:5.6px;color:#151515;-webkit-text-stroke:0.06px #151515;">No priority</div>
<div class="t" style="left:87.60px;top:493.36px;font-size:5.6px;color:#7a7a7a;-webkit-text-stroke:0.1px #7a7a7a;">Set</div>
<div class="t" style="left:133.70px;top:493.36px;font-size:5.6px;color:#151515;-webkit-text-stroke:0.2px #151515;">Level 2</div>
<div class="a" style="left:199.3px;top:114px;width:1.6px;height:65px;background:#e9a25a;"></div>
<div class="a" style="left:202.6px;top:114.5px;width:3.3px;height:298.5px;background:#c4c4c4;border-radius:1.5px"></div>
<div class="a" style="left:28px;top:509.5px;width:55px;height:1px;background:#8a8a8a;"></div>
<div class="t" style="left:28.30px;top:520.08px;font-size:6.4px;color:#222;letter-spacing:0.041px;-webkit-text-stroke:0.15px #222;">-8 of 8 issues</div>
<div class="t" style="left:111.60px;top:520.00px;font-size:6.5px;color:#222;letter-spacing:-0.193px;-webkit-text-stroke:0.08px #222;">Page</div>
<div class="a" style="left:129px;top:515.5px;width:23px;height:13px;background:#fff;border:1px solid #dadada"></div>
<div class="t" style="left:131.20px;top:520.00px;font-size:6.5px;color:#222;-webkit-text-stroke:0.05px #222;">1</div>
<div class="t" style="left:154.00px;top:520.00px;font-size:6.5px;color:#222;letter-spacing:-0.114px;-webkit-text-stroke:0.08px #222;">of 1</div>
<div class="a" style="left:173.5px;top:516px;width:12.5px;height:11.5px;background:#f5f5f5;"></div>
<div class="a" style="left:190.8px;top:516px;width:12.5px;height:11.5px;background:#f5f5f5;"></div>
<svg style="left:177px;top:518.5px" width="6" height="7"><path d="M4 0.8L1.5 3.3L4 5.8" stroke="#888" stroke-width="0.95" fill="none"/></svg>
<svg style="left:194.5px;top:518.5px" width="6" height="7"><path d="M1.5 0.8L4 3.3L1.5 5.8" stroke="#888" stroke-width="0.95" fill="none"/></svg>
<svg style="left:219px;top:122px" width="6" height="6"><circle cx="3" cy="3" r="2.5" fill="#e8792c"/></svg>
<div class="t" style="left:226.70px;top:122.62px;font-size:7.3px;color:#222;letter-spacing:0.037px;-webkit-text-stroke:0.15px #222;">OPEN</div>
<div class="t" style="left:252.30px;top:122.62px;font-size:7.3px;color:#222;-webkit-text-stroke:0.15px #222;">8</div>
<div class="t" style="left:263.50px;top:122.62px;font-size:7.3px;color:#222;-webkit-text-stroke:0.15px #222;">Clash</div>
<div class="a" style="left:211px;top:137px;width:224px;height:1px;background:#e4e4e4;"></div>
<div class="a" style="left:211px;top:138px;width:22.5px;height:466px;background:#fcfcfc;"></div>
<div class="a" style="left:211px;top:138px;width:22.5px;height:22.5px;background:#f2f2f2;"></div>
<div class="a" style="left:233.5px;top:137px;width:1px;height:467px;background:#d0d0d0;"></div>
<svg style="left:217px;top:144.5px" width="11" height="11"><circle cx="5.5" cy="5.5" r="4.6" stroke="#777" stroke-width="0.8" fill="none"/><path d="M5.5 4.6V8.2" stroke="#777" stroke-width="1"/><circle cx="5.5" cy="3" r="0.6" fill="#777"/></svg>
<svg style="left:217.8px;top:168.5px" width="10" height="17"><rect x="0.9" y="0.6" width="7.6" height="4.6" fill="none" stroke="#5a5a5a" stroke-width="0.9"/><path d="M1.2 4.5L3.2 2.3L5 3.8L8.2 1.5V5H1.2Z" fill="#5a5a5a"/><circle cx="4.5" cy="12.1" r="4" fill="#5a5a5a"/><text x="4.5" y="14.0" font-family="Liberation Sans" font-size="5.2" font-weight="bold" fill="#fff" text-anchor="middle">1</text></svg>
<svg style="left:217.8px;top:196.5px" width="10" height="17"><rect x="0.9" y="0.5" width="7.8" height="4.5" rx="0.6" fill="#606060"/><path d="M2 4.5L2 6L3.8 4.5Z" fill="#606060"/><circle cx="4.5" cy="10.9" r="4" fill="#5a5a5a"/><text x="4.5" y="12.8" font-family="Liberation Sans" font-size="5.2" font-weight="bold" fill="#fff" text-anchor="middle">5</text></svg>
<svg style="left:217.8px;top:221.5px" width="10" height="18"><g transform="rotate(-45 4.5 3.8)"><rect x="0.3" y="2.3" width="4.8" height="3" rx="1.5" fill="none" stroke="#5a5a5a" stroke-width="0.85"/><rect x="3.9" y="2.3" width="4.8" height="3" rx="1.5" fill="none" stroke="#5a5a5a" stroke-width="0.85"/></g><circle cx="4.5" cy="13.3" r="4" fill="#5a5a5a"/><text x="4.5" y="15.200000000000001" font-family="Liberation Sans" font-size="5.2" font-weight="bold" fill="#fff" text-anchor="middle">2</text></svg>
<svg style="left:218px;top:254px" width="9" height="8"><path d="M1 1L7.6 1.3L4.3 6.7" stroke="#555" stroke-width="0.6" fill="none"/><circle cx="1" cy="1" r="0.95" fill="#333"/><circle cx="7.6" cy="1.3" r="0.95" fill="#333"/><circle cx="4.3" cy="6.7" r="0.95" fill="#333"/></svg>
<div class="a" style="left:236px;top:138px;width:192px;height:143px;background:#fff;border-left:1px solid #f0f0f0"></div>
<div class="a" style="left:236px;top:280.3px;width:192px;height:1.8px;background:#efefef;"></div>
<svg style="left:243.5px;top:145px" width="7" height="5"><path d="M0.8 0.9L3.2 3.4L5.6 0.9" stroke="#444" stroke-width="1.2" fill="none"/></svg>
<div class="t" style="left:256.10px;top:144.22px;font-size:7.3px;color:#6e6e6e;letter-spacing:0.031px;-webkit-text-stroke:0.15px #6e6e6e;">Details</div>
<svg style="left:406.5px;top:141.5px" width="8" height="8"><path d="M0.8 7L1.3 5.3L5.8 0.8L7 2L2.5 6.5Z" fill="#444"/></svg>
<div class="t" style="left:243.70px;top:159.78px;font-size:6.4px;color:#151515;font-weight:bold;letter-spacing:0.022px;-webkit-text-stroke:0.15px #151515;">STRUC vs MECHANICAL - Clash3</div>
<div class="t" style="left:243.70px;top:170.28px;font-size:6.4px;color:#8a8a8a;-webkit-text-stroke:0.15px #8a8a8a;">Assignee</div>
<div class="t" style="left:290.10px;top:170.28px;font-size:6.4px;color:#1c1c1c;-webkit-text-stroke:0.15px #1c1c1c;">Eric Gibb (Apex )</div>
<div class="t" style="left:243.70px;top:182.38px;font-size:6.4px;color:#8a8a8a;-webkit-text-stroke:0.15px #8a8a8a;">Due date</div>
<div class="t" style="left:290.10px;top:182.38px;font-size:6.4px;color:#1c1c1c;-webkit-text-stroke:0.15px #1c1c1c;">No due date</div>
<div class="t" style="left:243.70px;top:194.48px;font-size:6.4px;color:#8a8a8a;-webkit-text-stroke:0.15px #8a8a8a;">Priority</div>
<div class="t" style="left:290.10px;top:194.48px;font-size:6.4px;color:#1c1c1c;-webkit-text-stroke:0.15px #1c1c1c;">No priority</div>
<div class="t" style="left:243.70px;top:206.28px;font-size:6.4px;color:#8a8a8a;-webkit-text-stroke:0.15px #8a8a8a;">Set</div>
<div class="t" style="left:290.10px;top:206.28px;font-size:6.4px;color:#1c1c1c;-webkit-text-stroke:0.15px #1c1c1c;">Level 1</div>
<div class="a" style="left:243px;top:218.5px;width:173px;height:1px;background:#ececec;"></div>
<div class="t" style="left:243.70px;top:225.48px;font-size:6.4px;color:#7a7a7a;letter-spacing:-0.031px;-webkit-text-stroke:0.15px #7a7a7a;">Description</div>
<div class="t" style="left:243.70px;top:235.98px;font-size:6.4px;color:#1c1c1c;letter-spacing:0.013px;-webkit-text-stroke:0.15px #1c1c1c;">Hard (id:2eb9edaf-bfdb-449d-a8ea-0fa7dc905a30)</div>
<div class="a" style="left:243px;top:246px;width:173px;height:1px;background:#ececec;"></div>
<div class="t" style="left:243.70px;top:254.88px;font-size:6.4px;color:#8a8a8a;-webkit-text-stroke:0.15px #8a8a8a;">Created by</div>
<div class="t" style="left:290.10px;top:254.88px;font-size:6.4px;color:#1c1c1c;-webkit-text-stroke:0.1px #1c1c1c">Patrick O'Leary (Majestic )</div>
<div class="t" style="left:243.70px;top:266.58px;font-size:6.4px;color:#8a8a8a;-webkit-text-stroke:0.15px #8a8a8a;">Created on</div>
<div class="t" style="left:290.10px;top:266.58px;font-size:6.4px;color:#1c1c1c;-webkit-text-stroke:0.1px #1c1c1c">27 March 2019</div>
<div class="a" style="left:236px;top:282px;width:192px;height:68.5px;background:#fff;border-left:1px solid #f0f0f0"></div>
<div class="a" style="left:236px;top:350.5px;width:192px;height:1.8px;background:#efefef;"></div>
<svg style="left:243.5px;top:292.5px" width="7" height="5"><path d="M0.8 0.9L3.2 3.4L5.6 0.9" stroke="#444" stroke-width="1.2" fill="none"/></svg>
<div class="t" style="left:256.10px;top:291.52px;font-size:7.3px;color:#6e6e6e;-webkit-text-stroke:0.15px #6e6e6e;">Viewpoints</div>
<svg style="left:244.3px;top:305.5px" width="54" height="30"><rect width="54" height="30" fill="#0e0e0e"/><rect width="54" height="30" filter="url(#nz)"/><path d="M0 4.4L54 16.3V23.4L0 9.6Z" fill="#ff4545"/><path d="M22 14.5L26 13.2L29 15.5L25 17Z" fill="#3ccf3c"/><circle cx="49.5" cy="3.8" r="4.6" fill="#8a8a8a"/><text x="49.8" y="5.8" font-family="Liberation Sans" font-size="5" font-weight="bold" fill="#fff" text-anchor="middle">1</text></svg>
<div class="a" style="left:236px;top:352.3px;width:192px;height:180px;background:#fff;border-left:1px solid #f0f0f0"></div>
<div class="a" style="left:236px;top:532px;width:192px;height:1px;background:#f2f2f2;"></div>
<svg style="left:243.5px;top:362.5px" width="7" height="5"><path d="M0.8 0.9L3.2 3.4L5.6 0.9" stroke="#444" stroke-width="1.2" fill="none"/></svg>
<div class="t" style="left:256.10px;top:361.52px;font-size:7.3px;color:#6e6e6e;-webkit-text-stroke:0.15px #6e6e6e;">Activity</div>
<div class="a" style="left:245.1px;top:376.6px;width:53.4px;height:12px;background:#f4f4f4;border:1px solid #dcdcdc;border-radius:1px"></div>
<div class="t" style="left:250.70px;top:380.11px;font-size:6.6px;color:#333;letter-spacing:0.178px;-webkit-text-stroke:0.05px #333;">Add comment</div>
<div class="t" style="left:245.10px;top:398.17px;font-size:6.3px;color:#858585;letter-spacing:0.068px;-webkit-text-stroke:0.15px #858585;">Patrick O'Leary - Majestic - 27 March 2019</div>
<div class="t" style="left:245.10px;top:410.17px;font-size:6.3px;color:#1c1c1c;-webkit-text-stroke:0.15px #1c1c1c;">Edited set from Not in set to Level 1</div>
<div class="t" style="left:245.10px;top:427.37px;font-size:6.3px;color:#858585;letter-spacing:0.068px;-webkit-text-stroke:0.15px #858585;">Patrick O'Leary - Majestic - 27 March 2019</div>
<div class="t" style="left:245.10px;top:439.37px;font-size:6.3px;color:#1c1c1c;-webkit-text-stroke:0.15px #1c1c1c;">Added related subject models;</div>
<div class="t" style="left:245.10px;top:448.47px;font-size:6.3px;color:#1c1c1c;-webkit-text-stroke:0.15px #1c1c1c;">Structural</div>
<div class="t" style="left:245.10px;top:457.57px;font-size:6.3px;color:#1c1c1c;-webkit-text-stroke:0.15px #1c1c1c;">Mechanical</div>
<div class="t" style="left:245.10px;top:475.17px;font-size:6.3px;color:#858585;letter-spacing:0.068px;-webkit-text-stroke:0.15px #858585;">Patrick O'Leary - Majestic - 27 March 2019</div>
<div class="t" style="left:245.10px;top:487.17px;font-size:6.3px;color:#1c1c1c;-webkit-text-stroke:0.15px #1c1c1c;">Added viewpoint 1</div>
<div class="t" style="left:245.10px;top:504.37px;font-size:6.3px;color:#858585;letter-spacing:0.068px;-webkit-text-stroke:0.15px #858585;">Patrick O'Leary - Majestic - 27 March 2019</div>
<div class="t" style="left:245.10px;top:516.37px;font-size:6.3px;color:#1c1c1c;-webkit-text-stroke:0.15px #1c1c1c;">Edited assignee from No assignee to Eric Gibb, Apex</div>
<div class="a" style="left:429.8px;top:139.8px;width:3.2px;height:243.5px;background:#c4c4c4;border-radius:1.6px"></div>
<div class="a" style="left:435px;top:114px;width:1px;height:419.5px;background:#dedede;"></div>
<div class="a" style="left:438.3px;top:114px;width:1px;height:419.5px;background:#e2e2e2;"></div>
<div class="a" style="left:211px;top:113.6px;width:696px;height:1px;background:#e4e4e4;"></div>
<svg style="left:447px;top:123px" width="7" height="5"><path d="M0.8 0.9L3.2 3.4L5.6 0.9" stroke="#333" stroke-width="1.25" fill="none"/></svg>
<div class="t" style="left:459.20px;top:123.21px;font-size:6.6px;color:#606060;letter-spacing:-0.073px;-webkit-text-stroke:0.05px #606060;">Viewpoint snapshot</div>
<div class="a" style="left:439px;top:137px;width:468px;height:1px;background:#e4e4e4;"></div>
<div class="a" style="left:439px;top:138px;width:468px;height:184.5px;background:#f3f3f3;"></div>
<div class="a" style="left:439px;top:322.5px;width:468px;height:1px;background:#dcdcdc;"></div>
<div class="a" style="left:439px;top:325px;width:468px;height:1px;background:#e8e8e8;"></div>
<svg style="left:510.3px;top:137.4px" width="327.5" height="184.5"><rect width="327.5" height="184.5" fill="#070707"/><defs><filter id="nz2" x="0" y="0" width="100%" height="100%"><feTurbulence type="fractalNoise" baseFrequency="0.4" numOctaves="3" seed="7"/><feColorMatrix values="0 0 0 0 0.3  0 0 0 0 0.3  0 0 0 0 0.3  0 0 0 1.7 -0.74"/></filter><linearGradient id="g2" x1="0" y1="0" x2="1" y2="1"><stop offset="0" stop-color="#fff" stop-opacity="0.25"/><stop offset="0.45" stop-color="#fff" stop-opacity="0.55"/><stop offset="1" stop-color="#fff" stop-opacity="1"/></linearGradient><mask id="m2"><rect width="327.5" height="184.5" fill="url(#g2)"/></mask></defs><g mask="url(#m2)"><rect width="327.5" height="184.5" filter="url(#nz2)"/></g><path d="M-37.5 19.3L-6.6 135.3" stroke="rgb(82,82,82)" stroke-width="0.9" opacity="0.65"/><path d="M-10.9 46.5L15.3 156.1" stroke="rgb(75,75,75)" stroke-width="0.9" opacity="0.65"/><path d="M-16.2 -9.0L30.3 194.0" stroke="rgb(60,60,60)" stroke-width="0.9" opacity="0.65"/><path d="M-1.9 -5.0L39.4 190.0" stroke="rgb(84,84,84)" stroke-width="0.9" opacity="0.65"/><path d="M28.1 43.9L47.0 146.6" stroke="rgb(83,83,83)" stroke-width="0.9" opacity="0.65"/><path d="M37.8 24.8L53.7 120.4" stroke="rgb(77,77,77)" stroke-width="0.9" opacity="0.65"/><path d="M49.4 41.9L61.1 118.0" stroke="rgb(64,64,64)" stroke-width="0.9" opacity="0.65"/><path d="M58.1 28.6L73.8 140.9" stroke="rgb(65,65,65)" stroke-width="0.9" opacity="0.65"/><path d="M68.9 -5.0L92.1 190.0" stroke="rgb(61,61,61)" stroke-width="0.9" opacity="0.65"/><path d="M89.4 57.8L102.7 190.5" stroke="rgb(81,81,81)" stroke-width="0.9" opacity="0.65"/><path d="M106.6 59.2L111.0 116.4" stroke="rgb(78,78,78)" stroke-width="0.9" opacity="0.95"/><path d="M114.7 4.1L126.0 193.1" stroke="rgb(72,72,72)" stroke-width="0.9" opacity="0.95"/><path d="M127.1 -5.0L135.5 190.0" stroke="rgb(71,71,71)" stroke-width="0.9" opacity="0.95"/><path d="M141.7 -8.1L144.7 118.4" stroke="rgb(68,68,68)" stroke-width="0.9" opacity="0.95"/><path d="M159.9 -9.8L160.0 116.3" stroke="rgb(75,75,75)" stroke-width="0.9" opacity="0.95"/><path d="M169.7 32.6L168.0 160.1" stroke="rgb(78,78,78)" stroke-width="0.9" opacity="0.95"/><path d="M181.6 -5.0L176.1 190.0" stroke="rgb(65,65,65)" stroke-width="0.9" opacity="0.95"/><path d="M199.7 7.2L193.5 125.2" stroke="rgb(69,69,69)" stroke-width="0.9" opacity="0.95"/><path d="M208.3 16.2L198.2 171.5" stroke="rgb(73,73,73)" stroke-width="0.9" opacity="0.95"/><path d="M227.5 18.5L211.1 199.0" stroke="rgb(67,67,67)" stroke-width="0.9" opacity="0.95"/><path d="M241.3 -5.0L220.5 190.0" stroke="rgb(71,71,71)" stroke-width="0.9" opacity="0.95"/><path d="M253.3 29.3L237.9 149.5" stroke="rgb(65,65,65)" stroke-width="0.9" opacity="0.95"/><path d="M270.7 -5.0L242.4 190.0" stroke="rgb(61,61,61)" stroke-width="0.9" opacity="0.95"/><path d="M279.1 7.4L257.3 145.5" stroke="rgb(73,73,73)" stroke-width="0.9" opacity="0.95"/><path d="M286.5 58.8L265.2 177.1" stroke="rgb(64,64,64)" stroke-width="0.9" opacity="0.95"/><path d="M309.0 -5.0L271.0 190.0" stroke="rgb(80,80,80)" stroke-width="0.9" opacity="0.95"/><path d="M312.0 45.7L281.4 189.3" stroke="rgb(71,71,71)" stroke-width="0.9" opacity="0.95"/><path d="M338.6 -5.0L293.1 190.0" stroke="rgb(78,78,78)" stroke-width="0.9" opacity="0.95"/><path d="M341.6 43.8L324.6 110.9" stroke="rgb(64,64,64)" stroke-width="0.9" opacity="0.95"/><path d="M371.0 -5.0L317.2 190.0" stroke="rgb(60,60,60)" stroke-width="0.9" opacity="0.95"/><path d="M23.7 -32.3L256.8 16.0" stroke="rgb(61,61,61)" stroke-width="0.9" opacity="0.85"/><path d="M4.1 -26.4L255.6 14.1" stroke="rgb(52,52,52)" stroke-width="0.9" opacity="0.85"/><path d="M-7.8 -19.4L216.7 18.0" stroke="rgb(52,52,52)" stroke-width="0.9" opacity="0.85"/><path d="M47.4 -0.8L324.3 51.1" stroke="rgb(58,58,58)" stroke-width="0.9" opacity="0.85"/><path d="M14.3 2.9L304.2 59.5" stroke="rgb(60,60,60)" stroke-width="0.9" opacity="0.85"/><path d="M128.6 38.5L308.4 74.0" stroke="rgb(64,64,64)" stroke-width="0.9" opacity="0.85"/><path d="M127.0 43.4L255.7 67.1" stroke="rgb(62,62,62)" stroke-width="0.9" opacity="0.85"/><path d="M23.0 39.5L297.5 85.9" stroke="rgb(55,55,55)" stroke-width="0.9" opacity="0.85"/><path d="M6.5 42.6L301.7 104.4" stroke="rgb(60,60,60)" stroke-width="0.9" opacity="0.85"/><path d="M63.3 68.0L280.2 107.6" stroke="rgb(65,65,65)" stroke-width="0.9" opacity="0.85"/><path d="M144.4 90.1L243.4 109.1" stroke="rgb(58,58,58)" stroke-width="0.9" opacity="0.85"/><path d="M12.2 77.7L286.3 124.2" stroke="rgb(65,65,65)" stroke-width="0.9" opacity="0.85"/><path d="M34.1 89.5L339.1 137.3" stroke="rgb(50,50,50)" stroke-width="0.9" opacity="0.85"/><path d="M86.5 112.0L313.1 159.3" stroke="rgb(50,50,50)" stroke-width="0.9" opacity="0.85"/><path d="M95.6 124.1L298.8 160.3" stroke="rgb(48,48,48)" stroke-width="0.9" opacity="0.85"/><path d="M-8.0 116.1L203.5 156.2" stroke="rgb(60,60,60)" stroke-width="0.9" opacity="0.85"/><path d="M99.7 144.5L314.4 186.1" stroke="rgb(56,56,56)" stroke-width="0.9" opacity="0.85"/><path d="M47.8 146.1L245.8 178.5" stroke="rgb(55,55,55)" stroke-width="0.9" opacity="0.85"/><path d="M-13.6 149.1L224.2 190.1" stroke="rgb(50,50,50)" stroke-width="0.9" opacity="0.85"/><path d="M112.5 182.1L287.8 216.4" stroke="rgb(54,54,54)" stroke-width="0.9" opacity="0.85"/><path d="M166.9 82.6L327.5 122.9" stroke="rgb(81,81,81)" stroke-width="0.9" opacity="0.85"/><path d="M132.5 79.7L327.5 127.8" stroke="rgb(77,77,77)" stroke-width="0.9" opacity="0.85"/><path d="M198.8 99.1L327.5 126.2" stroke="rgb(84,84,84)" stroke-width="0.9" opacity="0.85"/><path d="M186.3 110.4L327.5 146.1" stroke="rgb(71,71,71)" stroke-width="0.9" opacity="0.85"/><path d="M98.7 92.9L327.5 145.1" stroke="rgb(67,67,67)" stroke-width="0.9" opacity="0.85"/><path d="M171.7 128.0L327.5 169.9" stroke="rgb(85,85,85)" stroke-width="0.9" opacity="0.85"/><path d="M167.4 127.2L327.5 162.8" stroke="rgb(67,67,67)" stroke-width="0.9" opacity="0.85"/><path d="M154.0 129.4L327.5 167.8" stroke="rgb(82,82,82)" stroke-width="0.9" opacity="0.85"/><path d="M125.4 130.6L327.5 176.1" stroke="rgb(62,62,62)" stroke-width="0.9" opacity="0.85"/><path d="M189.0 158.8L327.5 192.1" stroke="rgb(66,66,66)" stroke-width="0.9" opacity="0.85"/><path d="M120.5 147.0L327.5 195.2" stroke="rgb(84,84,84)" stroke-width="0.9" opacity="0.85"/><path d="M134.2 161.7L327.5 207.6" stroke="rgb(76,76,76)" stroke-width="0.9" opacity="0.85"/><path d="M109.2 162.1L327.5 213.0" stroke="rgb(83,83,83)" stroke-width="0.9" opacity="0.85"/><path d="M197.3 187.1L327.5 216.1" stroke="rgb(68,68,68)" stroke-width="0.9" opacity="0.85"/><path d="M192.8 200.0L327.5 234.0" stroke="rgb(82,82,82)" stroke-width="0.9" opacity="0.85"/><path d="M153.8 194.0L327.5 234.7" stroke="rgb(78,78,78)" stroke-width="0.9" opacity="0.85"/><path d="M-40.5 185.0L69.5 95.0" stroke="rgb(74,74,74)" stroke-width="0.9" opacity="0.8"/><path d="M-22.1 185.0L87.9 95.0" stroke="rgb(60,60,60)" stroke-width="0.9" opacity="0.8"/><path d="M3.5 185.0L113.5 95.0" stroke="rgb(64,64,64)" stroke-width="0.9" opacity="0.8"/><path d="M16.8 185.0L126.8 95.0" stroke="rgb(69,69,69)" stroke-width="0.9" opacity="0.8"/><path d="M37.5 185.0L147.5 95.0" stroke="rgb(71,71,71)" stroke-width="0.9" opacity="0.8"/><path d="M63.2 185.0L173.2 95.0" stroke="rgb(71,71,71)" stroke-width="0.9" opacity="0.8"/><path d="M77.3 185.0L187.3 95.0" stroke="rgb(78,78,78)" stroke-width="0.9" opacity="0.8"/><path d="M102.3 185.0L212.3 95.0" stroke="rgb(73,73,73)" stroke-width="0.9" opacity="0.8"/><path d="M120.2 185.0L230.2 95.0" stroke="rgb(61,61,61)" stroke-width="0.9" opacity="0.8"/><path d="M138.5 185.0L248.5 95.0" stroke="rgb(73,73,73)" stroke-width="0.9" opacity="0.8"/><path d="M-5.0 59.4L150.0 175.7" stroke="rgb(77,77,77)" stroke-width="0.9" opacity="0.8"/><path d="M-5.0 72.5L150.0 188.7" stroke="rgb(78,78,78)" stroke-width="0.9" opacity="0.8"/><path d="M-5.0 89.8L150.0 206.1" stroke="rgb(78,78,78)" stroke-width="0.9" opacity="0.8"/><path d="M-5.0 104.6L150.0 220.8" stroke="rgb(60,60,60)" stroke-width="0.9" opacity="0.8"/><path d="M-5.0 117.0L150.0 233.2" stroke="rgb(62,62,62)" stroke-width="0.9" opacity="0.8"/><path d="M-5.0 127.5L150.0 243.7" stroke="rgb(66,66,66)" stroke-width="0.9" opacity="0.8"/><path d="M-5.0 141.9L150.0 258.2" stroke="rgb(75,75,75)" stroke-width="0.9" opacity="0.8"/><path d="M-5.0 159.9L150.0 276.1" stroke="rgb(79,79,79)" stroke-width="0.9" opacity="0.8"/><path d="M-5.0 172.2L150.0 288.5" stroke="rgb(75,75,75)" stroke-width="0.9" opacity="0.8"/><path d="M154.3 147.6L158.6 148.5" stroke="rgb(73,73,73)" stroke-width="0.8" opacity="0.8"/><path d="M222.9 120.5L223.6 125.6" stroke="rgb(77,77,77)" stroke-width="0.8" opacity="0.8"/><path d="M238.4 96.8L237.7 101.7" stroke="rgb(57,57,57)" stroke-width="0.8" opacity="0.8"/><path d="M156.7 159.4L158.0 170.5" stroke="rgb(58,58,58)" stroke-width="0.8" opacity="0.8"/><path d="M175.6 162.7L182.2 158.2" stroke="rgb(83,83,83)" stroke-width="0.8" opacity="0.8"/><path d="M242.3 162.9L243.0 168.0" stroke="rgb(66,66,66)" stroke-width="0.8" opacity="0.8"/><path d="M242.4 136.9L248.7 132.5" stroke="rgb(87,87,87)" stroke-width="0.8" opacity="0.8"/><path d="M13.3 158.4L21.4 160.1" stroke="rgb(74,74,74)" stroke-width="0.8" opacity="0.8"/><path d="M123.4 72.6L117.1 81.4" stroke="rgb(73,73,73)" stroke-width="0.8" opacity="0.8"/><path d="M188.8 184.1L187.4 194.8" stroke="rgb(90,90,90)" stroke-width="0.8" opacity="0.8"/><path d="M266.1 89.1L277.1 91.3" stroke="rgb(63,63,63)" stroke-width="0.8" opacity="0.8"/><path d="M283.4 138.6L292.8 140.5" stroke="rgb(84,84,84)" stroke-width="0.8" opacity="0.8"/><path d="M259.7 171.2L270.5 173.4" stroke="rgb(59,59,59)" stroke-width="0.8" opacity="0.8"/><path d="M244.3 45.9L248.2 46.7" stroke="rgb(73,73,73)" stroke-width="0.8" opacity="0.8"/><path d="M211.6 94.8L207.2 100.9" stroke="rgb(57,57,57)" stroke-width="0.8" opacity="0.8"/><path d="M73.2 145.6L66.7 154.6" stroke="rgb(69,69,69)" stroke-width="0.8" opacity="0.8"/><path d="M253.7 166.5L261.0 167.9" stroke="rgb(65,65,65)" stroke-width="0.8" opacity="0.8"/><path d="M98.0 178.0L97.4 182.3" stroke="rgb(65,65,65)" stroke-width="0.8" opacity="0.8"/><path d="M277.5 40.8L284.8 35.8" stroke="rgb(80,80,80)" stroke-width="0.8" opacity="0.8"/><path d="M228.7 149.9L238.8 151.9" stroke="rgb(77,77,77)" stroke-width="0.8" opacity="0.8"/><path d="M85.7 152.2L94.5 154.0" stroke="rgb(71,71,71)" stroke-width="0.8" opacity="0.8"/><path d="M127.5 147.8L135.6 149.5" stroke="rgb(86,86,86)" stroke-width="0.8" opacity="0.8"/><path d="M216.8 81.7L226.3 83.6" stroke="rgb(82,82,82)" stroke-width="0.8" opacity="0.8"/><path d="M142.4 142.1L146.4 139.4" stroke="rgb(57,57,57)" stroke-width="0.8" opacity="0.8"/><path d="M315.7 45.9L320.1 47.5" stroke="rgb(66,66,66)" stroke-width="0.8" opacity="0.8"/><path d="M226.5 88.6L224.0 92.1" stroke="rgb(60,60,60)" stroke-width="0.8" opacity="0.8"/><path d="M285.6 164.9L284.7 172.3" stroke="rgb(87,87,87)" stroke-width="0.8" opacity="0.8"/><path d="M247.1 30.6L250.3 31.8" stroke="rgb(75,75,75)" stroke-width="0.8" opacity="0.8"/><path d="M146.0 131.4L156.9 135.3" stroke="rgb(90,90,90)" stroke-width="0.8" opacity="0.8"/><path d="M273.4 180.7L266.9 189.7" stroke="rgb(71,71,71)" stroke-width="0.8" opacity="0.8"/><path d="M113.3 39.3L113.8 43.9" stroke="rgb(90,90,90)" stroke-width="0.8" opacity="0.8"/><path d="M234.9 112.1L233.4 123.3" stroke="rgb(74,74,74)" stroke-width="0.8" opacity="0.8"/><path d="M125.8 146.7L123.8 149.4" stroke="rgb(74,74,74)" stroke-width="0.8" opacity="0.8"/><path d="M286.4 183.8L293.1 186.2" stroke="rgb(66,66,66)" stroke-width="0.8" opacity="0.8"/><path d="M288.3 168.2L283.6 174.7" stroke="rgb(65,65,65)" stroke-width="0.8" opacity="0.8"/><path d="M267.6 167.8L268.8 177.2" stroke="rgb(56,56,56)" stroke-width="0.8" opacity="0.8"/><path d="M323.0 177.0L328.9 179.2" stroke="rgb(80,80,80)" stroke-width="0.8" opacity="0.8"/><path d="M258.0 90.1L262.7 86.9" stroke="rgb(69,69,69)" stroke-width="0.8" opacity="0.8"/><path d="M98.8 171.1L107.2 174.1" stroke="rgb(90,90,90)" stroke-width="0.8" opacity="0.8"/><path d="M38.0 98.4L39.1 107.1" stroke="rgb(70,70,70)" stroke-width="0.8" opacity="0.8"/><path d="M298.3 156.4L298.9 161.2" stroke="rgb(89,89,89)" stroke-width="0.8" opacity="0.8"/><path d="M217.8 73.3L211.3 82.2" stroke="rgb(58,58,58)" stroke-width="0.8" opacity="0.8"/><path d="M173.4 94.8L172.0 106.3" stroke="rgb(69,69,69)" stroke-width="0.8" opacity="0.8"/><path d="M198.0 6.2L193.7 12.2" stroke="rgb(66,66,66)" stroke-width="0.8" opacity="0.8"/><path d="M112.3 124.0L120.9 118.1" stroke="rgb(61,61,61)" stroke-width="0.8" opacity="0.8"/><path d="M260.6 88.1L254.0 97.1" stroke="rgb(58,58,58)" stroke-width="0.8" opacity="0.8"/><path d="M246.1 180.0L250.3 180.8" stroke="rgb(88,88,88)" stroke-width="0.8" opacity="0.8"/><path d="M163.3 58.9L169.6 61.2" stroke="rgb(83,83,83)" stroke-width="0.8" opacity="0.8"/><path d="M302.6 143.5L313.4 145.7" stroke="rgb(67,67,67)" stroke-width="0.8" opacity="0.8"/><path d="M102.5 155.2L111.5 157.0" stroke="rgb(56,56,56)" stroke-width="0.8" opacity="0.8"/><path d="M314.9 16.6L312.6 19.9" stroke="rgb(86,86,86)" stroke-width="0.8" opacity="0.8"/><path d="M318.4 60.8L322.0 61.5" stroke="rgb(63,63,63)" stroke-width="0.8" opacity="0.8"/><path d="M58.0 138.4L66.5 140.1" stroke="rgb(88,88,88)" stroke-width="0.8" opacity="0.8"/><path d="M179.7 174.6L181.0 185.7" stroke="rgb(64,64,64)" stroke-width="0.8" opacity="0.8"/><path d="M234.3 172.9L233.7 177.9" stroke="rgb(68,68,68)" stroke-width="0.8" opacity="0.8"/><path d="M287.3 140.7L285.8 151.8" stroke="rgb(79,79,79)" stroke-width="0.8" opacity="0.8"/><path d="M243.3 50.3L242.9 53.5" stroke="rgb(86,86,86)" stroke-width="0.8" opacity="0.8"/><path d="M180.7 108.7L176.5 114.5" stroke="rgb(60,60,60)" stroke-width="0.8" opacity="0.8"/><path d="M258.8 180.5L253.7 187.6" stroke="rgb(60,60,60)" stroke-width="0.8" opacity="0.8"/><path d="M207.5 157.1L203.9 161.9" stroke="rgb(55,55,55)" stroke-width="0.8" opacity="0.8"/><path d="M209.6 174.9L212.2 173.2" stroke="rgb(71,71,71)" stroke-width="0.8" opacity="0.8"/><path d="M307.8 13.2L308.3 17.5" stroke="rgb(69,69,69)" stroke-width="0.8" opacity="0.8"/><path d="M92.6 123.9L98.9 125.1" stroke="rgb(68,68,68)" stroke-width="0.8" opacity="0.8"/><path d="M285.0 160.9L290.1 162.0" stroke="rgb(71,71,71)" stroke-width="0.8" opacity="0.8"/><path d="M208.3 106.6L203.3 113.4" stroke="rgb(76,76,76)" stroke-width="0.8" opacity="0.8"/><path d="M188.0 147.5L184.0 153.0" stroke="rgb(88,88,88)" stroke-width="0.8" opacity="0.8"/><path d="M324.5 100.4L325.9 111.8" stroke="rgb(87,87,87)" stroke-width="0.8" opacity="0.8"/><path d="M154.1 124.3L161.2 125.7" stroke="rgb(77,77,77)" stroke-width="0.8" opacity="0.8"/><path d="M117.1 151.4L112.6 157.5" stroke="rgb(70,70,70)" stroke-width="0.8" opacity="0.8"/><path d="M180.4 183.5L184.1 184.2" stroke="rgb(79,79,79)" stroke-width="0.8" opacity="0.8"/><path d="M101.6 113.2L102.9 123.2" stroke="rgb(78,78,78)" stroke-width="0.8" opacity="0.8"/><path d="M141.0 108.9L134.7 117.5" stroke="rgb(58,58,58)" stroke-width="0.8" opacity="0.8"/><path d="M185.3 119.0L184.6 124.7" stroke="rgb(87,87,87)" stroke-width="0.8" opacity="0.8"/><path d="M129.8 132.3L136.3 127.8" stroke="rgb(81,81,81)" stroke-width="0.8" opacity="0.8"/><path d="M208.7 84.7L203.1 92.3" stroke="rgb(89,89,89)" stroke-width="0.8" opacity="0.8"/><path d="M29.6 158.6L34.6 160.4" stroke="rgb(82,82,82)" stroke-width="0.8" opacity="0.8"/><path d="M286.9 157.5L286.1 163.5" stroke="rgb(82,82,82)" stroke-width="0.8" opacity="0.8"/><path d="M209.5 148.2L216.4 149.6" stroke="rgb(65,65,65)" stroke-width="0.8" opacity="0.8"/><path d="M47.2 180.2L50.7 181.5" stroke="rgb(78,78,78)" stroke-width="0.8" opacity="0.8"/><path d="M305.2 33.2L309.8 34.1" stroke="rgb(64,64,64)" stroke-width="0.8" opacity="0.8"/><path d="M90.6 101.5L95.9 97.9" stroke="rgb(83,83,83)" stroke-width="0.8" opacity="0.8"/><path d="M301.7 176.1L310.1 177.8" stroke="rgb(72,72,72)" stroke-width="0.8" opacity="0.8"/><path d="M200.5 171.1L199.8 176.7" stroke="rgb(83,83,83)" stroke-width="0.8" opacity="0.8"/><path d="M90.1 168.5L89.6 172.7" stroke="rgb(74,74,74)" stroke-width="0.8" opacity="0.8"/><path d="M281.0 90.3L284.4 88.0" stroke="rgb(70,70,70)" stroke-width="0.8" opacity="0.8"/><path d="M134.5 152.5L138.9 153.4" stroke="rgb(84,84,84)" stroke-width="0.8" opacity="0.8"/><path d="M193.5 141.6L196.8 142.3" stroke="rgb(57,57,57)" stroke-width="0.8" opacity="0.8"/><path d="M177.5 180.8L176.2 191.0" stroke="rgb(89,89,89)" stroke-width="0.8" opacity="0.8"/><path d="M300.8 128.2L301.8 136.5" stroke="rgb(73,73,73)" stroke-width="0.8" opacity="0.8"/><path d="M168.7 86.2L168.2 89.9" stroke="rgb(70,70,70)" stroke-width="0.8" opacity="0.8"/><path d="M264.5 74.7L264.0 79.0" stroke="rgb(61,61,61)" stroke-width="0.8" opacity="0.8"/><path d="M138.0 136.7L137.2 142.6" stroke="rgb(82,82,82)" stroke-width="0.8" opacity="0.8"/><path d="M261.3 146.1L262.2 153.1" stroke="rgb(69,69,69)" stroke-width="0.8" opacity="0.8"/><path d="M29.5 110.8L32.3 111.8" stroke="rgb(65,65,65)" stroke-width="0.8" opacity="0.8"/><path d="M75.1 169.7L80.3 171.6" stroke="rgb(85,85,85)" stroke-width="0.8" opacity="0.8"/><path d="M280.9 177.3L274.8 185.7" stroke="rgb(72,72,72)" stroke-width="0.8" opacity="0.8"/><path d="M98.2 146.5L107.5 140.1" stroke="rgb(70,70,70)" stroke-width="0.8" opacity="0.8"/><path d="M208.2 91.2L210.9 89.4" stroke="rgb(60,60,60)" stroke-width="0.8" opacity="0.8"/><path d="M282.3 32.6L282.9 37.8" stroke="rgb(74,74,74)" stroke-width="0.8" opacity="0.8"/><path d="M29.5 181.3L28.7 187.3" stroke="rgb(76,76,76)" stroke-width="0.8" opacity="0.8"/><path d="M271.1 9.9L281.0 3.2" stroke="rgb(59,59,59)" stroke-width="0.8" opacity="0.8"/><path d="M320.1 179.1L326.6 180.5" stroke="rgb(78,78,78)" stroke-width="0.8" opacity="0.8"/><path d="M249.4 83.4L259.2 76.7" stroke="rgb(73,73,73)" stroke-width="0.8" opacity="0.8"/><path d="M4.2 177.5L13.8 170.9" stroke="rgb(65,65,65)" stroke-width="0.8" opacity="0.8"/><path d="M139.3 141.2L143.7 142.8" stroke="rgb(88,88,88)" stroke-width="0.8" opacity="0.8"/><path d="M117.2 168.4L114.7 171.7" stroke="rgb(84,84,84)" stroke-width="0.8" opacity="0.8"/><path d="M316.5 151.7L317.6 161.2" stroke="rgb(77,77,77)" stroke-width="0.8" opacity="0.8"/><path d="M314.6 173.7L313.3 184.4" stroke="rgb(77,77,77)" stroke-width="0.8" opacity="0.8"/><path d="M316.1 31.6L312.6 36.4" stroke="rgb(61,61,61)" stroke-width="0.8" opacity="0.8"/><path d="M16.8 112.0L10.9 120.2" stroke="rgb(78,78,78)" stroke-width="0.8" opacity="0.8"/><path d="M244.0 46.5L246.7 44.7" stroke="rgb(68,68,68)" stroke-width="0.8" opacity="0.8"/><path d="M301.6 153.1L301.0 157.7" stroke="rgb(81,81,81)" stroke-width="0.8" opacity="0.8"/><path d="M266.0 178.5L271.8 174.5" stroke="rgb(63,63,63)" stroke-width="0.8" opacity="0.8"/><path d="M291.3 120.1L290.6 125.1" stroke="rgb(59,59,59)" stroke-width="0.8" opacity="0.8"/><path d="M194.0 115.6L192.6 126.3" stroke="rgb(83,83,83)" stroke-width="0.8" opacity="0.8"/><path d="M127.6 161.6L126.5 169.5" stroke="rgb(61,61,61)" stroke-width="0.8" opacity="0.8"/><path d="M243.1 121.9L251.2 123.5" stroke="rgb(67,67,67)" stroke-width="0.8" opacity="0.8"/><path d="M315.0 183.7L322.9 178.3" stroke="rgb(67,67,67)" stroke-width="0.8" opacity="0.8"/><path d="M230.6 175.8L229.4 184.6" stroke="rgb(73,73,73)" stroke-width="0.8" opacity="0.8"/><path d="M308.5 148.2L309.5 156.3" stroke="rgb(58,58,58)" stroke-width="0.8" opacity="0.8"/><path d="M287.5 142.4L290.2 140.6" stroke="rgb(65,65,65)" stroke-width="0.8" opacity="0.8"/><path d="M220.3 101.3L221.5 110.7" stroke="rgb(88,88,88)" stroke-width="0.8" opacity="0.8"/><path d="M263.2 146.9L263.7 150.8" stroke="rgb(55,55,55)" stroke-width="0.8" opacity="0.8"/><path d="M163.1 53.2L159.3 58.3" stroke="rgb(64,64,64)" stroke-width="0.8" opacity="0.8"/><path d="M303.8 57.5L299.3 63.7" stroke="rgb(85,85,85)" stroke-width="0.8" opacity="0.8"/><path d="M170.7 158.6L178.7 160.2" stroke="rgb(67,67,67)" stroke-width="0.8" opacity="0.8"/><path d="M106.0 125.8L117.4 128.1" stroke="rgb(74,74,74)" stroke-width="0.8" opacity="0.8"/><path d="M133.1 108.2L140.9 109.8" stroke="rgb(73,73,73)" stroke-width="0.8" opacity="0.8"/><path d="M248.5 21.5L258.3 14.7" stroke="rgb(67,67,67)" stroke-width="0.8" opacity="0.8"/><path d="M305.1 93.5L310.3 89.9" stroke="rgb(74,74,74)" stroke-width="0.8" opacity="0.8"/><path d="M207.3 75.7L206.1 85.1" stroke="rgb(62,62,62)" stroke-width="0.8" opacity="0.8"/><path d="M295.3 18.5L302.2 13.8" stroke="rgb(59,59,59)" stroke-width="0.8" opacity="0.8"/><path d="M233.6 109.2L234.9 120.1" stroke="rgb(61,61,61)" stroke-width="0.8" opacity="0.8"/><path d="M292.2 50.5L296.9 51.5" stroke="rgb(87,87,87)" stroke-width="0.8" opacity="0.8"/><path d="M93.4 152.4L98.9 154.4" stroke="rgb(69,69,69)" stroke-width="0.8" opacity="0.8"/><path d="M92.3 138.6L101.4 140.5" stroke="rgb(65,65,65)" stroke-width="0.8" opacity="0.8"/><path d="M312.7 123.4L315.9 121.3" stroke="rgb(81,81,81)" stroke-width="0.8" opacity="0.8"/><path d="M316.7 143.7L316.3 147.5" stroke="rgb(79,79,79)" stroke-width="0.8" opacity="0.8"/><path d="M199.2 179.3L200.2 187.5" stroke="rgb(89,89,89)" stroke-width="0.8" opacity="0.8"/><path d="M226.8 35.7L224.9 38.3" stroke="rgb(90,90,90)" stroke-width="0.8" opacity="0.8"/><path d="M247.5 106.5L248.5 115.2" stroke="rgb(65,65,65)" stroke-width="0.8" opacity="0.8"/><path d="M222.5 48.2L218.6 53.6" stroke="rgb(61,61,61)" stroke-width="0.8" opacity="0.8"/><path d="M85.4 150.9L84.9 154.5" stroke="rgb(62,62,62)" stroke-width="0.8" opacity="0.8"/><path d="M299.8 90.3L300.9 99.4" stroke="rgb(81,81,81)" stroke-width="0.8" opacity="0.8"/><path d="M93.5 130.9L103.1 132.9" stroke="rgb(78,78,78)" stroke-width="0.8" opacity="0.8"/><path d="M316.4 137.0L325.6 130.7" stroke="rgb(59,59,59)" stroke-width="0.8" opacity="0.8"/><path d="M181.3 106.2L184.8 107.5" stroke="rgb(84,84,84)" stroke-width="0.8" opacity="0.8"/><path d="M296.4 104.7L293.3 108.9" stroke="rgb(57,57,57)" stroke-width="0.8" opacity="0.8"/><path d="M307.6 139.5L313.5 135.5" stroke="rgb(58,58,58)" stroke-width="0.8" opacity="0.8"/><path d="M233.4 85.7L227.2 94.1" stroke="rgb(64,64,64)" stroke-width="0.8" opacity="0.8"/><path d="M270.5 142.4L275.4 143.4" stroke="rgb(86,86,86)" stroke-width="0.8" opacity="0.8"/><path d="M318.0 168.6L311.8 177.1" stroke="rgb(60,60,60)" stroke-width="0.8" opacity="0.8"/><path d="M221.1 175.0L230.9 168.3" stroke="rgb(85,85,85)" stroke-width="0.8" opacity="0.8"/><path d="M211.2 154.2L212.5 165.6" stroke="rgb(72,72,72)" stroke-width="0.8" opacity="0.8"/><path d="M322.6 74.8L321.7 81.8" stroke="rgb(72,72,72)" stroke-width="0.8" opacity="0.8"/><path d="M290.3 66.0L291.0 71.4" stroke="rgb(86,86,86)" stroke-width="0.8" opacity="0.8"/><path d="M184.6 173.1L188.4 173.9" stroke="rgb(64,64,64)" stroke-width="0.8" opacity="0.8"/><path d="M235.9 84.7L246.2 86.8" stroke="rgb(74,74,74)" stroke-width="0.8" opacity="0.8"/><path d="M249.4 126.3L249.9 130.3" stroke="rgb(89,89,89)" stroke-width="0.8" opacity="0.8"/><path d="M34.2 149.8L44.4 151.8" stroke="rgb(89,89,89)" stroke-width="0.8" opacity="0.8"/><path d="M314.9 102.5L323.8 104.3" stroke="rgb(86,86,86)" stroke-width="0.8" opacity="0.8"/><path d="M13.5 147.0L21.1 148.5" stroke="rgb(68,68,68)" stroke-width="0.8" opacity="0.8"/><path d="M262.3 164.0L266.2 161.3" stroke="rgb(56,56,56)" stroke-width="0.8" opacity="0.8"/><path d="M291.2 131.3L288.5 135.1" stroke="rgb(78,78,78)" stroke-width="0.8" opacity="0.8"/><path d="M249.7 156.7L249.3 160.0" stroke="rgb(62,62,62)" stroke-width="0.8" opacity="0.8"/><path d="M218.0 176.8L222.9 178.6" stroke="rgb(64,64,64)" stroke-width="0.8" opacity="0.8"/><path d="M322.1 56.1L315.2 65.5" stroke="rgb(58,58,58)" stroke-width="0.8" opacity="0.8"/><path d="M186.9 113.1L185.6 123.2" stroke="rgb(64,64,64)" stroke-width="0.8" opacity="0.8"/><path d="M214.4 172.8L215.2 179.7" stroke="rgb(68,68,68)" stroke-width="0.8" opacity="0.8"/><path d="M299.3 135.5L300.4 144.2" stroke="rgb(80,80,80)" stroke-width="0.8" opacity="0.8"/><path d="M303.8 31.5L312.1 34.5" stroke="rgb(89,89,89)" stroke-width="0.8" opacity="0.8"/><path d="M95.1 170.5L104.8 163.9" stroke="rgb(77,77,77)" stroke-width="0.8" opacity="0.8"/><path d="M298.8 99.9L305.2 95.5" stroke="rgb(64,64,64)" stroke-width="0.8" opacity="0.8"/><path d="M122.0 117.4L122.4 121.2" stroke="rgb(86,86,86)" stroke-width="0.8" opacity="0.8"/><path d="M255.8 126.6L254.5 136.9" stroke="rgb(79,79,79)" stroke-width="0.8" opacity="0.8"/><path d="M285.7 154.3L289.0 155.5" stroke="rgb(72,72,72)" stroke-width="0.8" opacity="0.8"/><path d="M219.7 10.4L228.5 13.6" stroke="rgb(83,83,83)" stroke-width="0.8" opacity="0.8"/><path d="M181.1 175.7L181.9 182.3" stroke="rgb(78,78,78)" stroke-width="0.8" opacity="0.8"/><path d="M223.0 39.4L217.9 46.5" stroke="rgb(55,55,55)" stroke-width="0.8" opacity="0.8"/><path d="M120.0 110.7L115.4 117.1" stroke="rgb(84,84,84)" stroke-width="0.8" opacity="0.8"/><path d="M155.2 169.7L155.8 174.3" stroke="rgb(90,90,90)" stroke-width="0.8" opacity="0.8"/><path d="M304.3 65.2L311.5 60.3" stroke="rgb(74,74,74)" stroke-width="0.8" opacity="0.8"/><path d="M238.6 79.7L246.5 81.3" stroke="rgb(77,77,77)" stroke-width="0.8" opacity="0.8"/><path d="M223.5 178.7L220.8 182.3" stroke="rgb(58,58,58)" stroke-width="0.8" opacity="0.8"/><path d="M256.0 61.4L255.6 64.6" stroke="rgb(66,66,66)" stroke-width="0.8" opacity="0.8"/><path d="M158.5 75.3L168.4 68.5" stroke="rgb(58,58,58)" stroke-width="0.8" opacity="0.8"/><path d="M5 150Q40 118 95 104" stroke="#303030" stroke-width="0.8" fill="none"/><path d="M19 140Q56 110 109 98" stroke="#303030" stroke-width="0.8" fill="none"/><path d="M33 130Q72 102 123 92" stroke="#303030" stroke-width="0.8" fill="none"/><path d="M47 120Q88 94 137 86" stroke="#303030" stroke-width="0.8" fill="none"/><path d="M3.0 22.0L327.5 100.0" stroke="#40a040" stroke-width="0.7" opacity="0.9"/><path d="M28.0 18.0L150.0 90.0" stroke="#40a040" stroke-width="0.7" opacity="0.9"/><path d="M112.0 1.0L327.5 66.0" stroke="#40a040" stroke-width="0.7" opacity="0.9"/><path d="M179.3 2.0L327.5 35.0" stroke="#40a040" stroke-width="0.7" opacity="0.9"/><path d="M256.9 2.0L127.7 182.6" stroke="#40a040" stroke-width="0.7" opacity="0.9"/><path d="M150.0 92.0L296.6 181.4" stroke="#40a040" stroke-width="0.7" opacity="0.9"/><path d="M269.0 1.0L327.5 9.3" stroke="#40a040" stroke-width="0.7" opacity="0.9"/><path d="M0 28.3L327.5 109.1V146.6L0 49.1Z" fill="#ff4d4d" opacity="0.96"/><path d="M0 28.3L327.5 109.1V121.3L0 37Z" fill="#d83c3c" opacity="0.28"/><path d="M180 72.5L327.5 109.1V121.3L200 88Z" fill="#d83c3c" opacity="0.4"/><path d="M28 18L150 90" stroke="#c04040" stroke-width="0.6"/><path d="M122 83Q134 72 146 74Q154 78 155 86" stroke="#a83030" stroke-width="0.9" fill="none"/><path d="M12 38L22 52M16 36Q20 30 30 32" stroke="#c04040" stroke-width="0.7" fill="none"/><path d="M137.7 89.6L150 86.7L166.3 93.9L153.7 101.2Z" fill="#38e038"/><text x="2" y="26" font-family="Liberation Sans" font-size="4.5" font-weight="bold" fill="#4fd04f">C</text><text x="27" y="18" font-family="Liberation Sans" font-size="4.5" font-weight="bold" fill="#4fd04f">W</text><text x="112" y="6" font-family="Liberation Sans" font-size="4.5" font-weight="bold" fill="#4fd04f">V</text><text x="179" y="6" font-family="Liberation Sans" font-size="4.5" font-weight="bold" fill="#4fd04f">U</text><text x="254" y="7" font-family="Liberation Sans" font-size="4.5" font-weight="bold" fill="#4fd04f">2</text><text x="266" y="6" font-family="Liberation Sans" font-size="4.5" font-weight="bold" fill="#4fd04f">T</text><text x="321" y="12" font-family="Liberation Sans" font-size="4.5" font-weight="bold" fill="#4fd04f">1</text><text x="321" y="38" font-family="Liberation Sans" font-size="4.5" font-weight="bold" fill="#4fd04f">U</text><text x="321" y="68" font-family="Liberation Sans" font-size="4.5" font-weight="bold" fill="#4fd04f">V</text><text x="321" y="103" font-family="Liberation Sans" font-size="4.5" font-weight="bold" fill="#4fd04f">C</text><text x="293" y="184" font-family="Liberation Sans" font-size="4.5" font-weight="bold" fill="#4fd04f">W</text><text x="125" y="184" font-family="Liberation Sans" font-size="4.5" font-weight="bold" fill="#4fd04f">2</text><rect x="7.7" y="170" width="61" height="8.6" fill="#6a6a6a" opacity="0.95"/><text x="9" y="176.4" font-family="Liberation Sans" font-size="4.8" font-weight="bold" fill="#fff">[M] ZI | L3 | Apartments [2]</text></svg>
<svg style="left:447px;top:334.5px" width="7" height="5"><path d="M0.8 0.9L3.2 3.4L5.6 0.9" stroke="#333" stroke-width="1.25" fill="none"/></svg>
<div class="t" style="left:459.20px;top:334.51px;font-size:6.6px;color:#606060;letter-spacing:-0.095px;-webkit-text-stroke:0.05px #606060;">Model viewpoint</div>
<svg style="left:438.3px;top:348.5px" width="469" height="184.8"><rect width="469" height="184.8" fill="#000"/><path d="M217.2 94.1L221.2 90.8" stroke="#141414" stroke-width="0.9"/><path d="M235.8 170.1L253.0 149.8" stroke="#141414" stroke-width="0.9"/><path d="M19.2 94.9L48.3 103.6" stroke="#141414" stroke-width="0.9"/><path d="M73.7 74.5L97.0 45.3" stroke="#141414" stroke-width="0.9"/><path d="M276.9 152.1L283.2 146.3" stroke="#141414" stroke-width="0.9"/><path d="M136.6 137.6L144.3 139.9" stroke="#141414" stroke-width="0.9"/><path d="M125.1 70.4L134.2 62.5" stroke="#141414" stroke-width="0.9"/><path d="M415.7 167.3L428.2 149.0" stroke="#141414" stroke-width="0.9"/><path d="M11.0 101.5L36.3 107.2" stroke="#141414" stroke-width="0.9"/><path d="M56.9 123.8L62.0 125.1" stroke="#141414" stroke-width="0.9"/><path d="M39.2 118.2L48.3 97.7" stroke="#141414" stroke-width="0.9"/><path d="M431.9 100.8L437.6 94.8" stroke="#141414" stroke-width="0.9"/><path d="M271.9 65.0L278.3 67.6" stroke="#141414" stroke-width="0.9"/><path d="M260.3 127.8L280.5 93.5" stroke="#141414" stroke-width="0.9"/><path d="M468.0 57.6L480.3 62.6" stroke="#141414" stroke-width="0.9"/><path d="M286.6 46.2L304.6 27.9" stroke="#141414" stroke-width="0.9"/><path d="M363.3 52.6L383.1 36.5" stroke="#141414" stroke-width="0.9"/><path d="M211.7 98.2L217.0 100.0" stroke="#141414" stroke-width="0.9"/><path d="M374.9 87.6L384.7 69.6" stroke="#141414" stroke-width="0.9"/><path d="M152.3 52.9L183.9 60.0" stroke="#141414" stroke-width="0.9"/><path d="M11.9 153.0L40.4 161.8" stroke="#141414" stroke-width="0.9"/><path d="M116.4 146.8L135.3 113.0" stroke="#141414" stroke-width="0.9"/><path d="M188.0 94.0L215.3 101.7" stroke="#141414" stroke-width="0.9"/><path d="M80.2 162.1L95.5 126.1" stroke="#141414" stroke-width="0.9"/><path d="M81.0 177.1L86.2 178.8" stroke="#141414" stroke-width="0.9"/><path d="M28.6 70.2L54.7 41.5" stroke="#141414" stroke-width="0.9"/><path d="M166.3 60.4L169.8 53.1" stroke="#141414" stroke-width="0.9"/><path d="M260.7 140.8L278.5 117.0" stroke="#141414" stroke-width="0.9"/><path d="M358.4 95.5L387.6 102.4" stroke="#141414" stroke-width="0.9"/><path d="M361.9 167.5L364.7 161.4" stroke="#141414" stroke-width="0.9"/><path d="M248.0 65.1L279.6 72.0" stroke="#141414" stroke-width="0.9"/><path d="M104.3 41.9L119.1 22.2" stroke="#141414" stroke-width="0.9"/><path d="M182.1 65.1L201.3 51.0" stroke="#141414" stroke-width="0.9"/><path d="M441.5 44.2L463.8 53.0" stroke="#141414" stroke-width="0.9"/><path d="M245.5 117.8L272.4 123.6" stroke="#141414" stroke-width="0.9"/><path d="M254.3 83.5L262.4 86.4" stroke="#141414" stroke-width="0.9"/><path d="M328.1 105.7L332.8 100.7" stroke="#141414" stroke-width="0.9"/><path d="M282.8 94.0L315.6 102.3" stroke="#141414" stroke-width="0.9"/><path d="M342.2 130.5L367.5 135.8" stroke="#141414" stroke-width="0.9"/><path d="M287.6 138.2L292.3 127.5" stroke="#141414" stroke-width="0.9"/><path d="M285.2 66.3L297.0 48.3" stroke="#141414" stroke-width="0.9"/><path d="M251.2 43.8L282.4 52.3" stroke="#141414" stroke-width="0.9"/><path d="M4.0 178.1L36.3 155.4" stroke="#141414" stroke-width="0.9"/><path d="M390.6 55.4L406.3 27.2" stroke="#141414" stroke-width="0.9"/><path d="M90.1 72.0L106.3 37.8" stroke="#141414" stroke-width="0.9"/><path d="M457.8 93.9L480.1 100.7" stroke="#141414" stroke-width="0.9"/><path d="M173.3 131.9L184.9 111.9" stroke="#141414" stroke-width="0.9"/><path d="M92.6 103.6L101.0 105.4" stroke="#141414" stroke-width="0.9"/><path d="M375.2 48.4L395.4 31.7" stroke="#141414" stroke-width="0.9"/><path d="M103.5 48.5L120.8 20.4" stroke="#141414" stroke-width="0.9"/><path d="M457.5 153.9L490.6 167.3" stroke="#141414" stroke-width="0.9"/><path d="M431.5 180.1L438.7 168.5" stroke="#141414" stroke-width="0.9"/><path d="M283.4 111.2L297.9 99.0" stroke="#141414" stroke-width="0.9"/><path d="M98.0 80.0L114.7 61.6" stroke="#141414" stroke-width="0.9"/><path d="M206.3 67.0L212.2 57.7" stroke="#141414" stroke-width="0.9"/><path d="M255.1 67.3L264.4 70.5" stroke="#141414" stroke-width="0.9"/><path d="M293.3 88.9L314.5 65.4" stroke="#141414" stroke-width="0.9"/><path d="M414.4 146.2L425.1 133.4" stroke="#141414" stroke-width="0.9"/><path d="M9.0 120.0L21.7 109.7" stroke="#141414" stroke-width="0.9"/><path d="M390.9 114.4L401.7 104.0" stroke="#141414" stroke-width="0.9"/><path d="M250.2 50.3L255.4 46.4" stroke="#141414" stroke-width="0.9"/><path d="M69.9 63.6L100.3 37.8" stroke="#141414" stroke-width="0.9"/><path d="M304.5 97.3L313.7 100.1" stroke="#141414" stroke-width="0.9"/><path d="M323.7 92.0L333.6 76.4" stroke="#141414" stroke-width="0.9"/><path d="M85.6 128.7L90.6 130.3" stroke="#141414" stroke-width="0.9"/><path d="M320.9 42.9L343.2 24.9" stroke="#141414" stroke-width="0.9"/><path d="M426.0 149.3L435.1 130.6" stroke="#141414" stroke-width="0.9"/><path d="M318.8 73.6L331.4 61.9" stroke="#141414" stroke-width="0.9"/><path d="M281.8 119.0L293.1 121.3" stroke="#141414" stroke-width="0.9"/><path d="M365.1 136.9L370.5 125.7" stroke="#141414" stroke-width="0.9"/><path d="M254.7 170.7L268.4 145.1" stroke="#141414" stroke-width="0.9"/><path d="M198.4 162.6L226.3 173.9" stroke="#141414" stroke-width="0.9"/><path d="M232.7 48.8L253.1 54.7" stroke="#141414" stroke-width="0.9"/><path d="M296.5 179.6L327.3 156.2" stroke="#141414" stroke-width="0.9"/><path d="M39.8 91.4L76.3 104.8" stroke="#141414" stroke-width="0.9"/><path d="M87.4 116.9L114.5 125.5" stroke="#141414" stroke-width="0.9"/><path d="M457.2 65.1L476.8 49.0" stroke="#141414" stroke-width="0.9"/><path d="M94.0 160.5L100.7 146.6" stroke="#141414" stroke-width="0.9"/><path d="M16.9 98.8L54.0 109.9" stroke="#141414" stroke-width="0.9"/><path d="M19.7 65.1L27.5 56.0" stroke="#141414" stroke-width="0.9"/><path d="M312.9 115.8L338.1 94.9" stroke="#141414" stroke-width="0.9"/><path d="M432.6 62.0L447.9 51.0" stroke="#141414" stroke-width="0.9"/><path d="M133.9 109.8L154.9 92.4" stroke="#141414" stroke-width="0.9"/><path d="M44.4 179.6L57.6 156.7" stroke="#141414" stroke-width="0.9"/><path d="M445.4 90.2L448.7 84.0" stroke="#141414" stroke-width="0.9"/><path d="M247.9 85.1L253.3 86.4" stroke="#141414" stroke-width="0.9"/><path d="M217.9 57.9L223.4 48.0" stroke="#141414" stroke-width="0.9"/><path d="M298.4 175.6L309.5 163.7" stroke="#141414" stroke-width="0.9"/><path d="M429.2 120.1L438.2 111.6" stroke="#141414" stroke-width="0.9"/><path d="M22.0 42.8L38.5 48.7" stroke="#141414" stroke-width="0.9"/><polygon points="-0.3,-0.5 104.7,-0.5 468.7,91.0 468.7,176.5 -0.3,34.9" fill="#ff0000"/><polygon points="-0.3,1.0 31.7,3.5 131.7,30.5 161.7,38.0 311.7,79.0 468.7,120.3 468.7,176.5 -0.3,34.9" fill="#dd0000"/><polygon points="121.7,23.5 201.7,39.5 261.7,71.5 241.7,97.5 161.7,83.5" fill="#b00000" opacity="0.18"/><polygon points="169.7,85.5 184.2,79.2 202.7,80.2 242.9,97.3 214.0,114.5" fill="#1ef51e"/><path d="M201.7 80.5Q203.7 91.5 213.7 91.0Q223.7 89.5 223.7 84.5" stroke="#0a9a0a" stroke-width="0.7" fill="#19d419"/></svg>
<div class="a" style="left:443.2px;top:353px;width:31.4px;height:18.6px;background:#fcfcfc;border-radius:1.5px;box-shadow:0 0 2px rgba(0,0,0,0.55)"></div>
<div class="a" style="left:463.8px;top:355px;width:0.8px;height:14.5px;background:#dedede;"></div>
<svg style="left:449.5px;top:358.8px" width="11" height="8"><path d="M0.8 3.7Q5 -2 9.2 3.7Q5 9.4 0.8 3.7Z" stroke="#3a3a3a" stroke-width="1.1" fill="none"/><circle cx="5" cy="3.7" r="1.4" fill="#3a3a3a"/><circle cx="5" cy="3.7" r="0.45" fill="#fff"/></svg>
<svg style="left:467.5px;top:359.2px" width="5" height="7"><path d="M0.5 0.5L3.8 3.2L0.5 5.9Z" fill="#333"/></svg>
<div class="a" style="left:826.4px;top:353.5px;width:78.6px;height:18.5px;background:#fcfcfc;border-radius:1.5px;box-shadow:0 0 2px rgba(0,0,0,0.4)"></div>
<svg style="left:830px;top:357px" width="72" height="12"><path d="M3 6H13M8 1V11M4.5 3.5L2.2 6L4.5 8.5M11.5 3.5L13.8 6L11.5 8.5" stroke="#555" stroke-width="0.9" fill="none"/><path d="M23.5 4L26 1.5H29V8.5L26.5 11H23.5Z M23.5 4H26.5V11M26.5 4L29 1.5" stroke="#555" stroke-width="0.8" fill="#ddd"/><rect x="40.5" y="4.5" width="9.5" height="3.5" rx="1" stroke="#555" stroke-width="0.9" fill="none"/><path d="M63.8 2V10M59.8 6H67.8" stroke="#555" stroke-width="0.9"/></svg>
<div class="a" style="left:28px;top:604px;width:879px;height:3px;background:#ececec;"></div>
</body></html>
